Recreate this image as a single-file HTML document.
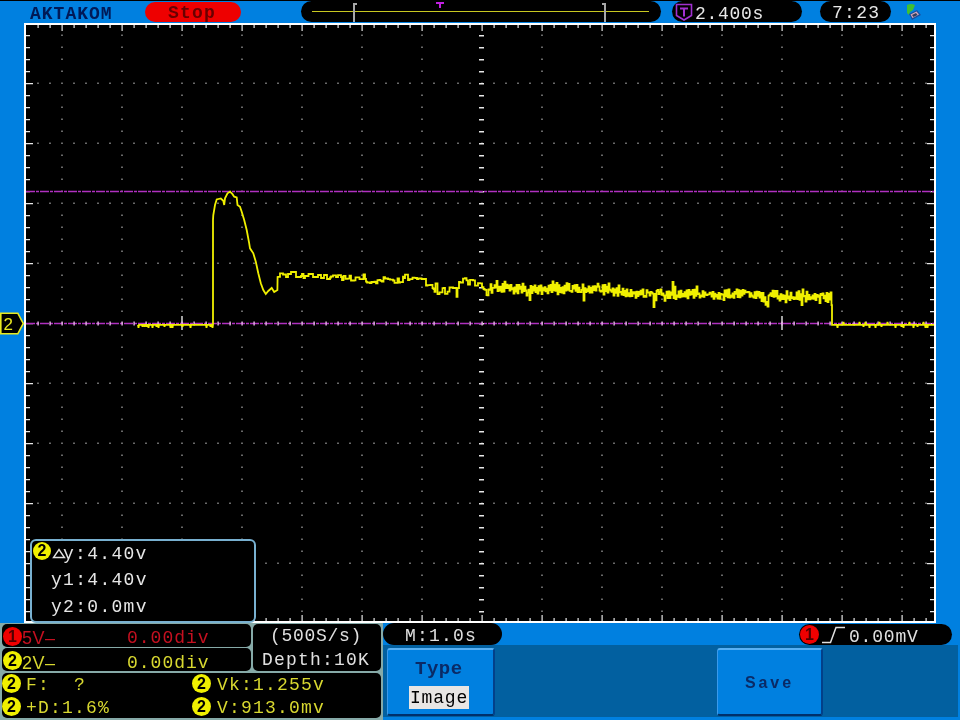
<!DOCTYPE html>
<html><head><meta charset="utf-8">
<style>
html,body{margin:0;padding:0;}
body{width:960px;height:720px;overflow:hidden;position:relative;background:#0080e0;font-family:"Liberation Mono",monospace;}
.a{position:absolute;}
.pill{position:absolute;background:#000;border-radius:11px;}
.txt{position:absolute;white-space:pre;line-height:1;will-change:transform;}
.box{position:absolute;background:#000;border:1px solid #86aaa8;border-radius:5px;box-sizing:border-box;}
.badge{position:absolute;width:19px;height:19px;border-radius:50%;background:#f0f000;color:#000;font-family:"Liberation Sans",sans-serif;font-size:16px;font-weight:bold;line-height:19px;text-align:center;}
.badge.r{background:#f00000;color:#500000;}
.btn{position:absolute;background:#0080e0;border-top:2px solid #58b0f4;border-left:1px solid #3a9aec;border-bottom:2px solid #00306a;border-right:2px solid #02408a;border-radius:3px;box-sizing:border-box;}
</style></head>
<body>
<div class="a" style="left:0;top:0;width:960px;height:1px;background:#000"></div>

<!-- top bar -->
<div class="txt" style="left:30px;top:5px;font-size:18px;color:#001a58;letter-spacing:1px;font-weight:bold">AKTAKOM</div>
<div class="pill" style="left:145px;top:2px;width:96px;height:20px;background:#ee0000;border-radius:10px"></div>
<div class="txt" style="left:168px;top:4px;font-size:18px;font-weight:bold;color:#6a0000;letter-spacing:1.2px">Stop</div>

<div class="pill" style="left:301px;top:1px;width:360px;height:21px"></div>
<div class="a" style="left:312px;top:11px;width:337px;height:1px;background:#c8c820"></div>
<div class="a" style="left:353px;top:3px;width:2px;height:19px;background:#a8a8a8"></div>
<div class="a" style="left:353px;top:3px;width:4px;height:1.5px;background:#a8a8a8"></div>
<div class="a" style="left:604px;top:3px;width:2px;height:19px;background:#a8a8a8"></div>
<div class="a" style="left:602px;top:3px;width:4px;height:1.5px;background:#a8a8a8"></div>
<svg class="a" style="left:435px;top:2px" width="10" height="7"><path d="M1 0h8v2h-3v4h-2v-4h-3z" fill="#c020e0"/></svg>

<div class="pill" style="left:672px;top:1px;width:130px;height:21px"></div>
<svg class="a" style="left:675px;top:3px" width="18" height="18"><path d="M1.5 1.5h15v11l-7.5 4.5l-7.5-4.5z" fill="none" stroke="#a030d0" stroke-width="1.6"/><path d="M5 4.5h8v2h-3v7h-2v-7h-3z" fill="#a030d0"/></svg>
<div class="txt" style="left:695px;top:5px;font-size:18px;color:#e8e8e8;letter-spacing:0.7px">2.400s</div>

<div class="pill" style="left:820px;top:1px;width:71px;height:21px"></div>
<div class="txt" style="left:832px;top:4px;font-size:18px;color:#e8e8e8;letter-spacing:1.3px">7:23</div>

<svg class="a" style="left:898px;top:0px" width="32" height="24"><path d="M9 5q4-2 8 0l-2 5l-3 2l-1 3l-2-2z" fill="#40c030"/><path d="M11 14l8-4l4 5l-9 5z" fill="#1850a0"/><path d="M12.5 14.5l6-3l2.5 3l-6.5 3.5z" fill="#d8a8b8"/><path d="M14 15l4-2l1.5 2l-4 2z" fill="#304060"/></svg>

<!-- grid -->
<svg class="a" style="left:0;top:0" width="960" height="720">
<rect x="26" y="25" width="908" height="596" fill="#000"/>
<path d="M37.25 82.5h1.5v1.5h-1.5zM37.25 142.5h1.5v1.5h-1.5zM37.25 202.5h1.5v1.5h-1.5zM37.25 262.5h1.5v1.5h-1.5zM37.25 382.5h1.5v1.5h-1.5zM37.25 442.5h1.5v1.5h-1.5zM37.25 502.5h1.5v1.5h-1.5zM37.25 562.5h1.5v1.5h-1.5zM49.25 82.5h1.5v1.5h-1.5zM49.25 142.5h1.5v1.5h-1.5zM49.25 202.5h1.5v1.5h-1.5zM49.25 262.5h1.5v1.5h-1.5zM49.25 382.5h1.5v1.5h-1.5zM49.25 442.5h1.5v1.5h-1.5zM49.25 502.5h1.5v1.5h-1.5zM49.25 562.5h1.5v1.5h-1.5zM61.25 34.5h1.5v1.5h-1.5zM61.25 46.5h1.5v1.5h-1.5zM61.25 58.5h1.5v1.5h-1.5zM61.25 70.5h1.5v1.5h-1.5zM61.25 82.5h1.5v1.5h-1.5zM61.25 94.5h1.5v1.5h-1.5zM61.25 106.5h1.5v1.5h-1.5zM61.25 118.5h1.5v1.5h-1.5zM61.25 130.5h1.5v1.5h-1.5zM61.25 142.5h1.5v1.5h-1.5zM61.25 154.5h1.5v1.5h-1.5zM61.25 166.5h1.5v1.5h-1.5zM61.25 178.5h1.5v1.5h-1.5zM61.25 190.5h1.5v1.5h-1.5zM61.25 202.5h1.5v1.5h-1.5zM61.25 214.5h1.5v1.5h-1.5zM61.25 226.5h1.5v1.5h-1.5zM61.25 238.5h1.5v1.5h-1.5zM61.25 250.5h1.5v1.5h-1.5zM61.25 262.5h1.5v1.5h-1.5zM61.25 274.5h1.5v1.5h-1.5zM61.25 286.5h1.5v1.5h-1.5zM61.25 298.5h1.5v1.5h-1.5zM61.25 310.5h1.5v1.5h-1.5zM61.25 322.5h1.5v1.5h-1.5zM61.25 334.5h1.5v1.5h-1.5zM61.25 346.5h1.5v1.5h-1.5zM61.25 358.5h1.5v1.5h-1.5zM61.25 370.5h1.5v1.5h-1.5zM61.25 382.5h1.5v1.5h-1.5zM61.25 394.5h1.5v1.5h-1.5zM61.25 406.5h1.5v1.5h-1.5zM61.25 418.5h1.5v1.5h-1.5zM61.25 430.5h1.5v1.5h-1.5zM61.25 442.5h1.5v1.5h-1.5zM61.25 454.5h1.5v1.5h-1.5zM61.25 466.5h1.5v1.5h-1.5zM61.25 478.5h1.5v1.5h-1.5zM61.25 490.5h1.5v1.5h-1.5zM61.25 502.5h1.5v1.5h-1.5zM61.25 514.5h1.5v1.5h-1.5zM61.25 526.5h1.5v1.5h-1.5zM61.25 538.5h1.5v1.5h-1.5zM61.25 550.5h1.5v1.5h-1.5zM61.25 562.5h1.5v1.5h-1.5zM61.25 574.5h1.5v1.5h-1.5zM61.25 586.5h1.5v1.5h-1.5zM61.25 598.5h1.5v1.5h-1.5zM61.25 610.5h1.5v1.5h-1.5zM73.25 82.5h1.5v1.5h-1.5zM73.25 142.5h1.5v1.5h-1.5zM73.25 202.5h1.5v1.5h-1.5zM73.25 262.5h1.5v1.5h-1.5zM73.25 382.5h1.5v1.5h-1.5zM73.25 442.5h1.5v1.5h-1.5zM73.25 502.5h1.5v1.5h-1.5zM73.25 562.5h1.5v1.5h-1.5zM85.25 82.5h1.5v1.5h-1.5zM85.25 142.5h1.5v1.5h-1.5zM85.25 202.5h1.5v1.5h-1.5zM85.25 262.5h1.5v1.5h-1.5zM85.25 382.5h1.5v1.5h-1.5zM85.25 442.5h1.5v1.5h-1.5zM85.25 502.5h1.5v1.5h-1.5zM85.25 562.5h1.5v1.5h-1.5zM97.25 82.5h1.5v1.5h-1.5zM97.25 142.5h1.5v1.5h-1.5zM97.25 202.5h1.5v1.5h-1.5zM97.25 262.5h1.5v1.5h-1.5zM97.25 382.5h1.5v1.5h-1.5zM97.25 442.5h1.5v1.5h-1.5zM97.25 502.5h1.5v1.5h-1.5zM97.25 562.5h1.5v1.5h-1.5zM109.25 82.5h1.5v1.5h-1.5zM109.25 142.5h1.5v1.5h-1.5zM109.25 202.5h1.5v1.5h-1.5zM109.25 262.5h1.5v1.5h-1.5zM109.25 382.5h1.5v1.5h-1.5zM109.25 442.5h1.5v1.5h-1.5zM109.25 502.5h1.5v1.5h-1.5zM109.25 562.5h1.5v1.5h-1.5zM121.25 34.5h1.5v1.5h-1.5zM121.25 46.5h1.5v1.5h-1.5zM121.25 58.5h1.5v1.5h-1.5zM121.25 70.5h1.5v1.5h-1.5zM121.25 82.5h1.5v1.5h-1.5zM121.25 94.5h1.5v1.5h-1.5zM121.25 106.5h1.5v1.5h-1.5zM121.25 118.5h1.5v1.5h-1.5zM121.25 130.5h1.5v1.5h-1.5zM121.25 142.5h1.5v1.5h-1.5zM121.25 154.5h1.5v1.5h-1.5zM121.25 166.5h1.5v1.5h-1.5zM121.25 178.5h1.5v1.5h-1.5zM121.25 190.5h1.5v1.5h-1.5zM121.25 202.5h1.5v1.5h-1.5zM121.25 214.5h1.5v1.5h-1.5zM121.25 226.5h1.5v1.5h-1.5zM121.25 238.5h1.5v1.5h-1.5zM121.25 250.5h1.5v1.5h-1.5zM121.25 262.5h1.5v1.5h-1.5zM121.25 274.5h1.5v1.5h-1.5zM121.25 286.5h1.5v1.5h-1.5zM121.25 298.5h1.5v1.5h-1.5zM121.25 310.5h1.5v1.5h-1.5zM121.25 322.5h1.5v1.5h-1.5zM121.25 334.5h1.5v1.5h-1.5zM121.25 346.5h1.5v1.5h-1.5zM121.25 358.5h1.5v1.5h-1.5zM121.25 370.5h1.5v1.5h-1.5zM121.25 382.5h1.5v1.5h-1.5zM121.25 394.5h1.5v1.5h-1.5zM121.25 406.5h1.5v1.5h-1.5zM121.25 418.5h1.5v1.5h-1.5zM121.25 430.5h1.5v1.5h-1.5zM121.25 442.5h1.5v1.5h-1.5zM121.25 454.5h1.5v1.5h-1.5zM121.25 466.5h1.5v1.5h-1.5zM121.25 478.5h1.5v1.5h-1.5zM121.25 490.5h1.5v1.5h-1.5zM121.25 502.5h1.5v1.5h-1.5zM121.25 514.5h1.5v1.5h-1.5zM121.25 526.5h1.5v1.5h-1.5zM121.25 538.5h1.5v1.5h-1.5zM121.25 550.5h1.5v1.5h-1.5zM121.25 562.5h1.5v1.5h-1.5zM121.25 574.5h1.5v1.5h-1.5zM121.25 586.5h1.5v1.5h-1.5zM121.25 598.5h1.5v1.5h-1.5zM121.25 610.5h1.5v1.5h-1.5zM133.25 82.5h1.5v1.5h-1.5zM133.25 142.5h1.5v1.5h-1.5zM133.25 202.5h1.5v1.5h-1.5zM133.25 262.5h1.5v1.5h-1.5zM133.25 382.5h1.5v1.5h-1.5zM133.25 442.5h1.5v1.5h-1.5zM133.25 502.5h1.5v1.5h-1.5zM133.25 562.5h1.5v1.5h-1.5zM145.25 82.5h1.5v1.5h-1.5zM145.25 142.5h1.5v1.5h-1.5zM145.25 202.5h1.5v1.5h-1.5zM145.25 262.5h1.5v1.5h-1.5zM145.25 382.5h1.5v1.5h-1.5zM145.25 442.5h1.5v1.5h-1.5zM145.25 502.5h1.5v1.5h-1.5zM145.25 562.5h1.5v1.5h-1.5zM157.25 82.5h1.5v1.5h-1.5zM157.25 142.5h1.5v1.5h-1.5zM157.25 202.5h1.5v1.5h-1.5zM157.25 262.5h1.5v1.5h-1.5zM157.25 382.5h1.5v1.5h-1.5zM157.25 442.5h1.5v1.5h-1.5zM157.25 502.5h1.5v1.5h-1.5zM157.25 562.5h1.5v1.5h-1.5zM169.25 82.5h1.5v1.5h-1.5zM169.25 142.5h1.5v1.5h-1.5zM169.25 202.5h1.5v1.5h-1.5zM169.25 262.5h1.5v1.5h-1.5zM169.25 382.5h1.5v1.5h-1.5zM169.25 442.5h1.5v1.5h-1.5zM169.25 502.5h1.5v1.5h-1.5zM169.25 562.5h1.5v1.5h-1.5zM181.25 34.5h1.5v1.5h-1.5zM181.25 46.5h1.5v1.5h-1.5zM181.25 58.5h1.5v1.5h-1.5zM181.25 70.5h1.5v1.5h-1.5zM181.25 82.5h1.5v1.5h-1.5zM181.25 94.5h1.5v1.5h-1.5zM181.25 106.5h1.5v1.5h-1.5zM181.25 118.5h1.5v1.5h-1.5zM181.25 130.5h1.5v1.5h-1.5zM181.25 142.5h1.5v1.5h-1.5zM181.25 154.5h1.5v1.5h-1.5zM181.25 166.5h1.5v1.5h-1.5zM181.25 178.5h1.5v1.5h-1.5zM181.25 190.5h1.5v1.5h-1.5zM181.25 202.5h1.5v1.5h-1.5zM181.25 214.5h1.5v1.5h-1.5zM181.25 226.5h1.5v1.5h-1.5zM181.25 238.5h1.5v1.5h-1.5zM181.25 250.5h1.5v1.5h-1.5zM181.25 262.5h1.5v1.5h-1.5zM181.25 274.5h1.5v1.5h-1.5zM181.25 286.5h1.5v1.5h-1.5zM181.25 298.5h1.5v1.5h-1.5zM181.25 310.5h1.5v1.5h-1.5zM181.25 322.5h1.5v1.5h-1.5zM181.25 334.5h1.5v1.5h-1.5zM181.25 346.5h1.5v1.5h-1.5zM181.25 358.5h1.5v1.5h-1.5zM181.25 370.5h1.5v1.5h-1.5zM181.25 382.5h1.5v1.5h-1.5zM181.25 394.5h1.5v1.5h-1.5zM181.25 406.5h1.5v1.5h-1.5zM181.25 418.5h1.5v1.5h-1.5zM181.25 430.5h1.5v1.5h-1.5zM181.25 442.5h1.5v1.5h-1.5zM181.25 454.5h1.5v1.5h-1.5zM181.25 466.5h1.5v1.5h-1.5zM181.25 478.5h1.5v1.5h-1.5zM181.25 490.5h1.5v1.5h-1.5zM181.25 502.5h1.5v1.5h-1.5zM181.25 514.5h1.5v1.5h-1.5zM181.25 526.5h1.5v1.5h-1.5zM181.25 538.5h1.5v1.5h-1.5zM181.25 550.5h1.5v1.5h-1.5zM181.25 562.5h1.5v1.5h-1.5zM181.25 574.5h1.5v1.5h-1.5zM181.25 586.5h1.5v1.5h-1.5zM181.25 598.5h1.5v1.5h-1.5zM181.25 610.5h1.5v1.5h-1.5zM193.25 82.5h1.5v1.5h-1.5zM193.25 142.5h1.5v1.5h-1.5zM193.25 202.5h1.5v1.5h-1.5zM193.25 262.5h1.5v1.5h-1.5zM193.25 382.5h1.5v1.5h-1.5zM193.25 442.5h1.5v1.5h-1.5zM193.25 502.5h1.5v1.5h-1.5zM193.25 562.5h1.5v1.5h-1.5zM205.25 82.5h1.5v1.5h-1.5zM205.25 142.5h1.5v1.5h-1.5zM205.25 202.5h1.5v1.5h-1.5zM205.25 262.5h1.5v1.5h-1.5zM205.25 382.5h1.5v1.5h-1.5zM205.25 442.5h1.5v1.5h-1.5zM205.25 502.5h1.5v1.5h-1.5zM205.25 562.5h1.5v1.5h-1.5zM217.25 82.5h1.5v1.5h-1.5zM217.25 142.5h1.5v1.5h-1.5zM217.25 202.5h1.5v1.5h-1.5zM217.25 262.5h1.5v1.5h-1.5zM217.25 382.5h1.5v1.5h-1.5zM217.25 442.5h1.5v1.5h-1.5zM217.25 502.5h1.5v1.5h-1.5zM217.25 562.5h1.5v1.5h-1.5zM229.25 82.5h1.5v1.5h-1.5zM229.25 142.5h1.5v1.5h-1.5zM229.25 202.5h1.5v1.5h-1.5zM229.25 262.5h1.5v1.5h-1.5zM229.25 382.5h1.5v1.5h-1.5zM229.25 442.5h1.5v1.5h-1.5zM229.25 502.5h1.5v1.5h-1.5zM229.25 562.5h1.5v1.5h-1.5zM241.25 34.5h1.5v1.5h-1.5zM241.25 46.5h1.5v1.5h-1.5zM241.25 58.5h1.5v1.5h-1.5zM241.25 70.5h1.5v1.5h-1.5zM241.25 82.5h1.5v1.5h-1.5zM241.25 94.5h1.5v1.5h-1.5zM241.25 106.5h1.5v1.5h-1.5zM241.25 118.5h1.5v1.5h-1.5zM241.25 130.5h1.5v1.5h-1.5zM241.25 142.5h1.5v1.5h-1.5zM241.25 154.5h1.5v1.5h-1.5zM241.25 166.5h1.5v1.5h-1.5zM241.25 178.5h1.5v1.5h-1.5zM241.25 190.5h1.5v1.5h-1.5zM241.25 202.5h1.5v1.5h-1.5zM241.25 214.5h1.5v1.5h-1.5zM241.25 226.5h1.5v1.5h-1.5zM241.25 238.5h1.5v1.5h-1.5zM241.25 250.5h1.5v1.5h-1.5zM241.25 262.5h1.5v1.5h-1.5zM241.25 274.5h1.5v1.5h-1.5zM241.25 286.5h1.5v1.5h-1.5zM241.25 298.5h1.5v1.5h-1.5zM241.25 310.5h1.5v1.5h-1.5zM241.25 322.5h1.5v1.5h-1.5zM241.25 334.5h1.5v1.5h-1.5zM241.25 346.5h1.5v1.5h-1.5zM241.25 358.5h1.5v1.5h-1.5zM241.25 370.5h1.5v1.5h-1.5zM241.25 382.5h1.5v1.5h-1.5zM241.25 394.5h1.5v1.5h-1.5zM241.25 406.5h1.5v1.5h-1.5zM241.25 418.5h1.5v1.5h-1.5zM241.25 430.5h1.5v1.5h-1.5zM241.25 442.5h1.5v1.5h-1.5zM241.25 454.5h1.5v1.5h-1.5zM241.25 466.5h1.5v1.5h-1.5zM241.25 478.5h1.5v1.5h-1.5zM241.25 490.5h1.5v1.5h-1.5zM241.25 502.5h1.5v1.5h-1.5zM241.25 514.5h1.5v1.5h-1.5zM241.25 526.5h1.5v1.5h-1.5zM241.25 538.5h1.5v1.5h-1.5zM241.25 550.5h1.5v1.5h-1.5zM241.25 562.5h1.5v1.5h-1.5zM241.25 574.5h1.5v1.5h-1.5zM241.25 586.5h1.5v1.5h-1.5zM241.25 598.5h1.5v1.5h-1.5zM241.25 610.5h1.5v1.5h-1.5zM253.25 82.5h1.5v1.5h-1.5zM253.25 142.5h1.5v1.5h-1.5zM253.25 202.5h1.5v1.5h-1.5zM253.25 262.5h1.5v1.5h-1.5zM253.25 382.5h1.5v1.5h-1.5zM253.25 442.5h1.5v1.5h-1.5zM253.25 502.5h1.5v1.5h-1.5zM253.25 562.5h1.5v1.5h-1.5zM265.25 82.5h1.5v1.5h-1.5zM265.25 142.5h1.5v1.5h-1.5zM265.25 202.5h1.5v1.5h-1.5zM265.25 262.5h1.5v1.5h-1.5zM265.25 382.5h1.5v1.5h-1.5zM265.25 442.5h1.5v1.5h-1.5zM265.25 502.5h1.5v1.5h-1.5zM265.25 562.5h1.5v1.5h-1.5zM277.25 82.5h1.5v1.5h-1.5zM277.25 142.5h1.5v1.5h-1.5zM277.25 202.5h1.5v1.5h-1.5zM277.25 262.5h1.5v1.5h-1.5zM277.25 382.5h1.5v1.5h-1.5zM277.25 442.5h1.5v1.5h-1.5zM277.25 502.5h1.5v1.5h-1.5zM277.25 562.5h1.5v1.5h-1.5zM289.25 82.5h1.5v1.5h-1.5zM289.25 142.5h1.5v1.5h-1.5zM289.25 202.5h1.5v1.5h-1.5zM289.25 262.5h1.5v1.5h-1.5zM289.25 382.5h1.5v1.5h-1.5zM289.25 442.5h1.5v1.5h-1.5zM289.25 502.5h1.5v1.5h-1.5zM289.25 562.5h1.5v1.5h-1.5zM301.25 34.5h1.5v1.5h-1.5zM301.25 46.5h1.5v1.5h-1.5zM301.25 58.5h1.5v1.5h-1.5zM301.25 70.5h1.5v1.5h-1.5zM301.25 82.5h1.5v1.5h-1.5zM301.25 94.5h1.5v1.5h-1.5zM301.25 106.5h1.5v1.5h-1.5zM301.25 118.5h1.5v1.5h-1.5zM301.25 130.5h1.5v1.5h-1.5zM301.25 142.5h1.5v1.5h-1.5zM301.25 154.5h1.5v1.5h-1.5zM301.25 166.5h1.5v1.5h-1.5zM301.25 178.5h1.5v1.5h-1.5zM301.25 190.5h1.5v1.5h-1.5zM301.25 202.5h1.5v1.5h-1.5zM301.25 214.5h1.5v1.5h-1.5zM301.25 226.5h1.5v1.5h-1.5zM301.25 238.5h1.5v1.5h-1.5zM301.25 250.5h1.5v1.5h-1.5zM301.25 262.5h1.5v1.5h-1.5zM301.25 274.5h1.5v1.5h-1.5zM301.25 286.5h1.5v1.5h-1.5zM301.25 298.5h1.5v1.5h-1.5zM301.25 310.5h1.5v1.5h-1.5zM301.25 322.5h1.5v1.5h-1.5zM301.25 334.5h1.5v1.5h-1.5zM301.25 346.5h1.5v1.5h-1.5zM301.25 358.5h1.5v1.5h-1.5zM301.25 370.5h1.5v1.5h-1.5zM301.25 382.5h1.5v1.5h-1.5zM301.25 394.5h1.5v1.5h-1.5zM301.25 406.5h1.5v1.5h-1.5zM301.25 418.5h1.5v1.5h-1.5zM301.25 430.5h1.5v1.5h-1.5zM301.25 442.5h1.5v1.5h-1.5zM301.25 454.5h1.5v1.5h-1.5zM301.25 466.5h1.5v1.5h-1.5zM301.25 478.5h1.5v1.5h-1.5zM301.25 490.5h1.5v1.5h-1.5zM301.25 502.5h1.5v1.5h-1.5zM301.25 514.5h1.5v1.5h-1.5zM301.25 526.5h1.5v1.5h-1.5zM301.25 538.5h1.5v1.5h-1.5zM301.25 550.5h1.5v1.5h-1.5zM301.25 562.5h1.5v1.5h-1.5zM301.25 574.5h1.5v1.5h-1.5zM301.25 586.5h1.5v1.5h-1.5zM301.25 598.5h1.5v1.5h-1.5zM301.25 610.5h1.5v1.5h-1.5zM313.25 82.5h1.5v1.5h-1.5zM313.25 142.5h1.5v1.5h-1.5zM313.25 202.5h1.5v1.5h-1.5zM313.25 262.5h1.5v1.5h-1.5zM313.25 382.5h1.5v1.5h-1.5zM313.25 442.5h1.5v1.5h-1.5zM313.25 502.5h1.5v1.5h-1.5zM313.25 562.5h1.5v1.5h-1.5zM325.25 82.5h1.5v1.5h-1.5zM325.25 142.5h1.5v1.5h-1.5zM325.25 202.5h1.5v1.5h-1.5zM325.25 262.5h1.5v1.5h-1.5zM325.25 382.5h1.5v1.5h-1.5zM325.25 442.5h1.5v1.5h-1.5zM325.25 502.5h1.5v1.5h-1.5zM325.25 562.5h1.5v1.5h-1.5zM337.25 82.5h1.5v1.5h-1.5zM337.25 142.5h1.5v1.5h-1.5zM337.25 202.5h1.5v1.5h-1.5zM337.25 262.5h1.5v1.5h-1.5zM337.25 382.5h1.5v1.5h-1.5zM337.25 442.5h1.5v1.5h-1.5zM337.25 502.5h1.5v1.5h-1.5zM337.25 562.5h1.5v1.5h-1.5zM349.25 82.5h1.5v1.5h-1.5zM349.25 142.5h1.5v1.5h-1.5zM349.25 202.5h1.5v1.5h-1.5zM349.25 262.5h1.5v1.5h-1.5zM349.25 382.5h1.5v1.5h-1.5zM349.25 442.5h1.5v1.5h-1.5zM349.25 502.5h1.5v1.5h-1.5zM349.25 562.5h1.5v1.5h-1.5zM361.25 34.5h1.5v1.5h-1.5zM361.25 46.5h1.5v1.5h-1.5zM361.25 58.5h1.5v1.5h-1.5zM361.25 70.5h1.5v1.5h-1.5zM361.25 82.5h1.5v1.5h-1.5zM361.25 94.5h1.5v1.5h-1.5zM361.25 106.5h1.5v1.5h-1.5zM361.25 118.5h1.5v1.5h-1.5zM361.25 130.5h1.5v1.5h-1.5zM361.25 142.5h1.5v1.5h-1.5zM361.25 154.5h1.5v1.5h-1.5zM361.25 166.5h1.5v1.5h-1.5zM361.25 178.5h1.5v1.5h-1.5zM361.25 190.5h1.5v1.5h-1.5zM361.25 202.5h1.5v1.5h-1.5zM361.25 214.5h1.5v1.5h-1.5zM361.25 226.5h1.5v1.5h-1.5zM361.25 238.5h1.5v1.5h-1.5zM361.25 250.5h1.5v1.5h-1.5zM361.25 262.5h1.5v1.5h-1.5zM361.25 274.5h1.5v1.5h-1.5zM361.25 286.5h1.5v1.5h-1.5zM361.25 298.5h1.5v1.5h-1.5zM361.25 310.5h1.5v1.5h-1.5zM361.25 322.5h1.5v1.5h-1.5zM361.25 334.5h1.5v1.5h-1.5zM361.25 346.5h1.5v1.5h-1.5zM361.25 358.5h1.5v1.5h-1.5zM361.25 370.5h1.5v1.5h-1.5zM361.25 382.5h1.5v1.5h-1.5zM361.25 394.5h1.5v1.5h-1.5zM361.25 406.5h1.5v1.5h-1.5zM361.25 418.5h1.5v1.5h-1.5zM361.25 430.5h1.5v1.5h-1.5zM361.25 442.5h1.5v1.5h-1.5zM361.25 454.5h1.5v1.5h-1.5zM361.25 466.5h1.5v1.5h-1.5zM361.25 478.5h1.5v1.5h-1.5zM361.25 490.5h1.5v1.5h-1.5zM361.25 502.5h1.5v1.5h-1.5zM361.25 514.5h1.5v1.5h-1.5zM361.25 526.5h1.5v1.5h-1.5zM361.25 538.5h1.5v1.5h-1.5zM361.25 550.5h1.5v1.5h-1.5zM361.25 562.5h1.5v1.5h-1.5zM361.25 574.5h1.5v1.5h-1.5zM361.25 586.5h1.5v1.5h-1.5zM361.25 598.5h1.5v1.5h-1.5zM361.25 610.5h1.5v1.5h-1.5zM373.25 82.5h1.5v1.5h-1.5zM373.25 142.5h1.5v1.5h-1.5zM373.25 202.5h1.5v1.5h-1.5zM373.25 262.5h1.5v1.5h-1.5zM373.25 382.5h1.5v1.5h-1.5zM373.25 442.5h1.5v1.5h-1.5zM373.25 502.5h1.5v1.5h-1.5zM373.25 562.5h1.5v1.5h-1.5zM385.25 82.5h1.5v1.5h-1.5zM385.25 142.5h1.5v1.5h-1.5zM385.25 202.5h1.5v1.5h-1.5zM385.25 262.5h1.5v1.5h-1.5zM385.25 382.5h1.5v1.5h-1.5zM385.25 442.5h1.5v1.5h-1.5zM385.25 502.5h1.5v1.5h-1.5zM385.25 562.5h1.5v1.5h-1.5zM397.25 82.5h1.5v1.5h-1.5zM397.25 142.5h1.5v1.5h-1.5zM397.25 202.5h1.5v1.5h-1.5zM397.25 262.5h1.5v1.5h-1.5zM397.25 382.5h1.5v1.5h-1.5zM397.25 442.5h1.5v1.5h-1.5zM397.25 502.5h1.5v1.5h-1.5zM397.25 562.5h1.5v1.5h-1.5zM409.25 82.5h1.5v1.5h-1.5zM409.25 142.5h1.5v1.5h-1.5zM409.25 202.5h1.5v1.5h-1.5zM409.25 262.5h1.5v1.5h-1.5zM409.25 382.5h1.5v1.5h-1.5zM409.25 442.5h1.5v1.5h-1.5zM409.25 502.5h1.5v1.5h-1.5zM409.25 562.5h1.5v1.5h-1.5zM421.25 34.5h1.5v1.5h-1.5zM421.25 46.5h1.5v1.5h-1.5zM421.25 58.5h1.5v1.5h-1.5zM421.25 70.5h1.5v1.5h-1.5zM421.25 82.5h1.5v1.5h-1.5zM421.25 94.5h1.5v1.5h-1.5zM421.25 106.5h1.5v1.5h-1.5zM421.25 118.5h1.5v1.5h-1.5zM421.25 130.5h1.5v1.5h-1.5zM421.25 142.5h1.5v1.5h-1.5zM421.25 154.5h1.5v1.5h-1.5zM421.25 166.5h1.5v1.5h-1.5zM421.25 178.5h1.5v1.5h-1.5zM421.25 190.5h1.5v1.5h-1.5zM421.25 202.5h1.5v1.5h-1.5zM421.25 214.5h1.5v1.5h-1.5zM421.25 226.5h1.5v1.5h-1.5zM421.25 238.5h1.5v1.5h-1.5zM421.25 250.5h1.5v1.5h-1.5zM421.25 262.5h1.5v1.5h-1.5zM421.25 274.5h1.5v1.5h-1.5zM421.25 286.5h1.5v1.5h-1.5zM421.25 298.5h1.5v1.5h-1.5zM421.25 310.5h1.5v1.5h-1.5zM421.25 322.5h1.5v1.5h-1.5zM421.25 334.5h1.5v1.5h-1.5zM421.25 346.5h1.5v1.5h-1.5zM421.25 358.5h1.5v1.5h-1.5zM421.25 370.5h1.5v1.5h-1.5zM421.25 382.5h1.5v1.5h-1.5zM421.25 394.5h1.5v1.5h-1.5zM421.25 406.5h1.5v1.5h-1.5zM421.25 418.5h1.5v1.5h-1.5zM421.25 430.5h1.5v1.5h-1.5zM421.25 442.5h1.5v1.5h-1.5zM421.25 454.5h1.5v1.5h-1.5zM421.25 466.5h1.5v1.5h-1.5zM421.25 478.5h1.5v1.5h-1.5zM421.25 490.5h1.5v1.5h-1.5zM421.25 502.5h1.5v1.5h-1.5zM421.25 514.5h1.5v1.5h-1.5zM421.25 526.5h1.5v1.5h-1.5zM421.25 538.5h1.5v1.5h-1.5zM421.25 550.5h1.5v1.5h-1.5zM421.25 562.5h1.5v1.5h-1.5zM421.25 574.5h1.5v1.5h-1.5zM421.25 586.5h1.5v1.5h-1.5zM421.25 598.5h1.5v1.5h-1.5zM421.25 610.5h1.5v1.5h-1.5zM433.25 82.5h1.5v1.5h-1.5zM433.25 142.5h1.5v1.5h-1.5zM433.25 202.5h1.5v1.5h-1.5zM433.25 262.5h1.5v1.5h-1.5zM433.25 382.5h1.5v1.5h-1.5zM433.25 442.5h1.5v1.5h-1.5zM433.25 502.5h1.5v1.5h-1.5zM433.25 562.5h1.5v1.5h-1.5zM445.25 82.5h1.5v1.5h-1.5zM445.25 142.5h1.5v1.5h-1.5zM445.25 202.5h1.5v1.5h-1.5zM445.25 262.5h1.5v1.5h-1.5zM445.25 382.5h1.5v1.5h-1.5zM445.25 442.5h1.5v1.5h-1.5zM445.25 502.5h1.5v1.5h-1.5zM445.25 562.5h1.5v1.5h-1.5zM457.25 82.5h1.5v1.5h-1.5zM457.25 142.5h1.5v1.5h-1.5zM457.25 202.5h1.5v1.5h-1.5zM457.25 262.5h1.5v1.5h-1.5zM457.25 382.5h1.5v1.5h-1.5zM457.25 442.5h1.5v1.5h-1.5zM457.25 502.5h1.5v1.5h-1.5zM457.25 562.5h1.5v1.5h-1.5zM469.25 82.5h1.5v1.5h-1.5zM469.25 142.5h1.5v1.5h-1.5zM469.25 202.5h1.5v1.5h-1.5zM469.25 262.5h1.5v1.5h-1.5zM469.25 382.5h1.5v1.5h-1.5zM469.25 442.5h1.5v1.5h-1.5zM469.25 502.5h1.5v1.5h-1.5zM469.25 562.5h1.5v1.5h-1.5zM481.25 82.5h1.5v1.5h-1.5zM481.25 142.5h1.5v1.5h-1.5zM481.25 202.5h1.5v1.5h-1.5zM481.25 262.5h1.5v1.5h-1.5zM481.25 382.5h1.5v1.5h-1.5zM481.25 442.5h1.5v1.5h-1.5zM481.25 502.5h1.5v1.5h-1.5zM481.25 562.5h1.5v1.5h-1.5zM493.25 82.5h1.5v1.5h-1.5zM493.25 142.5h1.5v1.5h-1.5zM493.25 202.5h1.5v1.5h-1.5zM493.25 262.5h1.5v1.5h-1.5zM493.25 382.5h1.5v1.5h-1.5zM493.25 442.5h1.5v1.5h-1.5zM493.25 502.5h1.5v1.5h-1.5zM493.25 562.5h1.5v1.5h-1.5zM505.25 82.5h1.5v1.5h-1.5zM505.25 142.5h1.5v1.5h-1.5zM505.25 202.5h1.5v1.5h-1.5zM505.25 262.5h1.5v1.5h-1.5zM505.25 382.5h1.5v1.5h-1.5zM505.25 442.5h1.5v1.5h-1.5zM505.25 502.5h1.5v1.5h-1.5zM505.25 562.5h1.5v1.5h-1.5zM517.25 82.5h1.5v1.5h-1.5zM517.25 142.5h1.5v1.5h-1.5zM517.25 202.5h1.5v1.5h-1.5zM517.25 262.5h1.5v1.5h-1.5zM517.25 382.5h1.5v1.5h-1.5zM517.25 442.5h1.5v1.5h-1.5zM517.25 502.5h1.5v1.5h-1.5zM517.25 562.5h1.5v1.5h-1.5zM529.25 82.5h1.5v1.5h-1.5zM529.25 142.5h1.5v1.5h-1.5zM529.25 202.5h1.5v1.5h-1.5zM529.25 262.5h1.5v1.5h-1.5zM529.25 382.5h1.5v1.5h-1.5zM529.25 442.5h1.5v1.5h-1.5zM529.25 502.5h1.5v1.5h-1.5zM529.25 562.5h1.5v1.5h-1.5zM541.25 34.5h1.5v1.5h-1.5zM541.25 46.5h1.5v1.5h-1.5zM541.25 58.5h1.5v1.5h-1.5zM541.25 70.5h1.5v1.5h-1.5zM541.25 82.5h1.5v1.5h-1.5zM541.25 94.5h1.5v1.5h-1.5zM541.25 106.5h1.5v1.5h-1.5zM541.25 118.5h1.5v1.5h-1.5zM541.25 130.5h1.5v1.5h-1.5zM541.25 142.5h1.5v1.5h-1.5zM541.25 154.5h1.5v1.5h-1.5zM541.25 166.5h1.5v1.5h-1.5zM541.25 178.5h1.5v1.5h-1.5zM541.25 190.5h1.5v1.5h-1.5zM541.25 202.5h1.5v1.5h-1.5zM541.25 214.5h1.5v1.5h-1.5zM541.25 226.5h1.5v1.5h-1.5zM541.25 238.5h1.5v1.5h-1.5zM541.25 250.5h1.5v1.5h-1.5zM541.25 262.5h1.5v1.5h-1.5zM541.25 274.5h1.5v1.5h-1.5zM541.25 286.5h1.5v1.5h-1.5zM541.25 298.5h1.5v1.5h-1.5zM541.25 310.5h1.5v1.5h-1.5zM541.25 322.5h1.5v1.5h-1.5zM541.25 334.5h1.5v1.5h-1.5zM541.25 346.5h1.5v1.5h-1.5zM541.25 358.5h1.5v1.5h-1.5zM541.25 370.5h1.5v1.5h-1.5zM541.25 382.5h1.5v1.5h-1.5zM541.25 394.5h1.5v1.5h-1.5zM541.25 406.5h1.5v1.5h-1.5zM541.25 418.5h1.5v1.5h-1.5zM541.25 430.5h1.5v1.5h-1.5zM541.25 442.5h1.5v1.5h-1.5zM541.25 454.5h1.5v1.5h-1.5zM541.25 466.5h1.5v1.5h-1.5zM541.25 478.5h1.5v1.5h-1.5zM541.25 490.5h1.5v1.5h-1.5zM541.25 502.5h1.5v1.5h-1.5zM541.25 514.5h1.5v1.5h-1.5zM541.25 526.5h1.5v1.5h-1.5zM541.25 538.5h1.5v1.5h-1.5zM541.25 550.5h1.5v1.5h-1.5zM541.25 562.5h1.5v1.5h-1.5zM541.25 574.5h1.5v1.5h-1.5zM541.25 586.5h1.5v1.5h-1.5zM541.25 598.5h1.5v1.5h-1.5zM541.25 610.5h1.5v1.5h-1.5zM553.25 82.5h1.5v1.5h-1.5zM553.25 142.5h1.5v1.5h-1.5zM553.25 202.5h1.5v1.5h-1.5zM553.25 262.5h1.5v1.5h-1.5zM553.25 382.5h1.5v1.5h-1.5zM553.25 442.5h1.5v1.5h-1.5zM553.25 502.5h1.5v1.5h-1.5zM553.25 562.5h1.5v1.5h-1.5zM565.25 82.5h1.5v1.5h-1.5zM565.25 142.5h1.5v1.5h-1.5zM565.25 202.5h1.5v1.5h-1.5zM565.25 262.5h1.5v1.5h-1.5zM565.25 382.5h1.5v1.5h-1.5zM565.25 442.5h1.5v1.5h-1.5zM565.25 502.5h1.5v1.5h-1.5zM565.25 562.5h1.5v1.5h-1.5zM577.25 82.5h1.5v1.5h-1.5zM577.25 142.5h1.5v1.5h-1.5zM577.25 202.5h1.5v1.5h-1.5zM577.25 262.5h1.5v1.5h-1.5zM577.25 382.5h1.5v1.5h-1.5zM577.25 442.5h1.5v1.5h-1.5zM577.25 502.5h1.5v1.5h-1.5zM577.25 562.5h1.5v1.5h-1.5zM589.25 82.5h1.5v1.5h-1.5zM589.25 142.5h1.5v1.5h-1.5zM589.25 202.5h1.5v1.5h-1.5zM589.25 262.5h1.5v1.5h-1.5zM589.25 382.5h1.5v1.5h-1.5zM589.25 442.5h1.5v1.5h-1.5zM589.25 502.5h1.5v1.5h-1.5zM589.25 562.5h1.5v1.5h-1.5zM601.25 34.5h1.5v1.5h-1.5zM601.25 46.5h1.5v1.5h-1.5zM601.25 58.5h1.5v1.5h-1.5zM601.25 70.5h1.5v1.5h-1.5zM601.25 82.5h1.5v1.5h-1.5zM601.25 94.5h1.5v1.5h-1.5zM601.25 106.5h1.5v1.5h-1.5zM601.25 118.5h1.5v1.5h-1.5zM601.25 130.5h1.5v1.5h-1.5zM601.25 142.5h1.5v1.5h-1.5zM601.25 154.5h1.5v1.5h-1.5zM601.25 166.5h1.5v1.5h-1.5zM601.25 178.5h1.5v1.5h-1.5zM601.25 190.5h1.5v1.5h-1.5zM601.25 202.5h1.5v1.5h-1.5zM601.25 214.5h1.5v1.5h-1.5zM601.25 226.5h1.5v1.5h-1.5zM601.25 238.5h1.5v1.5h-1.5zM601.25 250.5h1.5v1.5h-1.5zM601.25 262.5h1.5v1.5h-1.5zM601.25 274.5h1.5v1.5h-1.5zM601.25 286.5h1.5v1.5h-1.5zM601.25 298.5h1.5v1.5h-1.5zM601.25 310.5h1.5v1.5h-1.5zM601.25 322.5h1.5v1.5h-1.5zM601.25 334.5h1.5v1.5h-1.5zM601.25 346.5h1.5v1.5h-1.5zM601.25 358.5h1.5v1.5h-1.5zM601.25 370.5h1.5v1.5h-1.5zM601.25 382.5h1.5v1.5h-1.5zM601.25 394.5h1.5v1.5h-1.5zM601.25 406.5h1.5v1.5h-1.5zM601.25 418.5h1.5v1.5h-1.5zM601.25 430.5h1.5v1.5h-1.5zM601.25 442.5h1.5v1.5h-1.5zM601.25 454.5h1.5v1.5h-1.5zM601.25 466.5h1.5v1.5h-1.5zM601.25 478.5h1.5v1.5h-1.5zM601.25 490.5h1.5v1.5h-1.5zM601.25 502.5h1.5v1.5h-1.5zM601.25 514.5h1.5v1.5h-1.5zM601.25 526.5h1.5v1.5h-1.5zM601.25 538.5h1.5v1.5h-1.5zM601.25 550.5h1.5v1.5h-1.5zM601.25 562.5h1.5v1.5h-1.5zM601.25 574.5h1.5v1.5h-1.5zM601.25 586.5h1.5v1.5h-1.5zM601.25 598.5h1.5v1.5h-1.5zM601.25 610.5h1.5v1.5h-1.5zM613.25 82.5h1.5v1.5h-1.5zM613.25 142.5h1.5v1.5h-1.5zM613.25 202.5h1.5v1.5h-1.5zM613.25 262.5h1.5v1.5h-1.5zM613.25 382.5h1.5v1.5h-1.5zM613.25 442.5h1.5v1.5h-1.5zM613.25 502.5h1.5v1.5h-1.5zM613.25 562.5h1.5v1.5h-1.5zM625.25 82.5h1.5v1.5h-1.5zM625.25 142.5h1.5v1.5h-1.5zM625.25 202.5h1.5v1.5h-1.5zM625.25 262.5h1.5v1.5h-1.5zM625.25 382.5h1.5v1.5h-1.5zM625.25 442.5h1.5v1.5h-1.5zM625.25 502.5h1.5v1.5h-1.5zM625.25 562.5h1.5v1.5h-1.5zM637.25 82.5h1.5v1.5h-1.5zM637.25 142.5h1.5v1.5h-1.5zM637.25 202.5h1.5v1.5h-1.5zM637.25 262.5h1.5v1.5h-1.5zM637.25 382.5h1.5v1.5h-1.5zM637.25 442.5h1.5v1.5h-1.5zM637.25 502.5h1.5v1.5h-1.5zM637.25 562.5h1.5v1.5h-1.5zM649.25 82.5h1.5v1.5h-1.5zM649.25 142.5h1.5v1.5h-1.5zM649.25 202.5h1.5v1.5h-1.5zM649.25 262.5h1.5v1.5h-1.5zM649.25 382.5h1.5v1.5h-1.5zM649.25 442.5h1.5v1.5h-1.5zM649.25 502.5h1.5v1.5h-1.5zM649.25 562.5h1.5v1.5h-1.5zM661.25 34.5h1.5v1.5h-1.5zM661.25 46.5h1.5v1.5h-1.5zM661.25 58.5h1.5v1.5h-1.5zM661.25 70.5h1.5v1.5h-1.5zM661.25 82.5h1.5v1.5h-1.5zM661.25 94.5h1.5v1.5h-1.5zM661.25 106.5h1.5v1.5h-1.5zM661.25 118.5h1.5v1.5h-1.5zM661.25 130.5h1.5v1.5h-1.5zM661.25 142.5h1.5v1.5h-1.5zM661.25 154.5h1.5v1.5h-1.5zM661.25 166.5h1.5v1.5h-1.5zM661.25 178.5h1.5v1.5h-1.5zM661.25 190.5h1.5v1.5h-1.5zM661.25 202.5h1.5v1.5h-1.5zM661.25 214.5h1.5v1.5h-1.5zM661.25 226.5h1.5v1.5h-1.5zM661.25 238.5h1.5v1.5h-1.5zM661.25 250.5h1.5v1.5h-1.5zM661.25 262.5h1.5v1.5h-1.5zM661.25 274.5h1.5v1.5h-1.5zM661.25 286.5h1.5v1.5h-1.5zM661.25 298.5h1.5v1.5h-1.5zM661.25 310.5h1.5v1.5h-1.5zM661.25 322.5h1.5v1.5h-1.5zM661.25 334.5h1.5v1.5h-1.5zM661.25 346.5h1.5v1.5h-1.5zM661.25 358.5h1.5v1.5h-1.5zM661.25 370.5h1.5v1.5h-1.5zM661.25 382.5h1.5v1.5h-1.5zM661.25 394.5h1.5v1.5h-1.5zM661.25 406.5h1.5v1.5h-1.5zM661.25 418.5h1.5v1.5h-1.5zM661.25 430.5h1.5v1.5h-1.5zM661.25 442.5h1.5v1.5h-1.5zM661.25 454.5h1.5v1.5h-1.5zM661.25 466.5h1.5v1.5h-1.5zM661.25 478.5h1.5v1.5h-1.5zM661.25 490.5h1.5v1.5h-1.5zM661.25 502.5h1.5v1.5h-1.5zM661.25 514.5h1.5v1.5h-1.5zM661.25 526.5h1.5v1.5h-1.5zM661.25 538.5h1.5v1.5h-1.5zM661.25 550.5h1.5v1.5h-1.5zM661.25 562.5h1.5v1.5h-1.5zM661.25 574.5h1.5v1.5h-1.5zM661.25 586.5h1.5v1.5h-1.5zM661.25 598.5h1.5v1.5h-1.5zM661.25 610.5h1.5v1.5h-1.5zM673.25 82.5h1.5v1.5h-1.5zM673.25 142.5h1.5v1.5h-1.5zM673.25 202.5h1.5v1.5h-1.5zM673.25 262.5h1.5v1.5h-1.5zM673.25 382.5h1.5v1.5h-1.5zM673.25 442.5h1.5v1.5h-1.5zM673.25 502.5h1.5v1.5h-1.5zM673.25 562.5h1.5v1.5h-1.5zM685.25 82.5h1.5v1.5h-1.5zM685.25 142.5h1.5v1.5h-1.5zM685.25 202.5h1.5v1.5h-1.5zM685.25 262.5h1.5v1.5h-1.5zM685.25 382.5h1.5v1.5h-1.5zM685.25 442.5h1.5v1.5h-1.5zM685.25 502.5h1.5v1.5h-1.5zM685.25 562.5h1.5v1.5h-1.5zM697.25 82.5h1.5v1.5h-1.5zM697.25 142.5h1.5v1.5h-1.5zM697.25 202.5h1.5v1.5h-1.5zM697.25 262.5h1.5v1.5h-1.5zM697.25 382.5h1.5v1.5h-1.5zM697.25 442.5h1.5v1.5h-1.5zM697.25 502.5h1.5v1.5h-1.5zM697.25 562.5h1.5v1.5h-1.5zM709.25 82.5h1.5v1.5h-1.5zM709.25 142.5h1.5v1.5h-1.5zM709.25 202.5h1.5v1.5h-1.5zM709.25 262.5h1.5v1.5h-1.5zM709.25 382.5h1.5v1.5h-1.5zM709.25 442.5h1.5v1.5h-1.5zM709.25 502.5h1.5v1.5h-1.5zM709.25 562.5h1.5v1.5h-1.5zM721.25 34.5h1.5v1.5h-1.5zM721.25 46.5h1.5v1.5h-1.5zM721.25 58.5h1.5v1.5h-1.5zM721.25 70.5h1.5v1.5h-1.5zM721.25 82.5h1.5v1.5h-1.5zM721.25 94.5h1.5v1.5h-1.5zM721.25 106.5h1.5v1.5h-1.5zM721.25 118.5h1.5v1.5h-1.5zM721.25 130.5h1.5v1.5h-1.5zM721.25 142.5h1.5v1.5h-1.5zM721.25 154.5h1.5v1.5h-1.5zM721.25 166.5h1.5v1.5h-1.5zM721.25 178.5h1.5v1.5h-1.5zM721.25 190.5h1.5v1.5h-1.5zM721.25 202.5h1.5v1.5h-1.5zM721.25 214.5h1.5v1.5h-1.5zM721.25 226.5h1.5v1.5h-1.5zM721.25 238.5h1.5v1.5h-1.5zM721.25 250.5h1.5v1.5h-1.5zM721.25 262.5h1.5v1.5h-1.5zM721.25 274.5h1.5v1.5h-1.5zM721.25 286.5h1.5v1.5h-1.5zM721.25 298.5h1.5v1.5h-1.5zM721.25 310.5h1.5v1.5h-1.5zM721.25 322.5h1.5v1.5h-1.5zM721.25 334.5h1.5v1.5h-1.5zM721.25 346.5h1.5v1.5h-1.5zM721.25 358.5h1.5v1.5h-1.5zM721.25 370.5h1.5v1.5h-1.5zM721.25 382.5h1.5v1.5h-1.5zM721.25 394.5h1.5v1.5h-1.5zM721.25 406.5h1.5v1.5h-1.5zM721.25 418.5h1.5v1.5h-1.5zM721.25 430.5h1.5v1.5h-1.5zM721.25 442.5h1.5v1.5h-1.5zM721.25 454.5h1.5v1.5h-1.5zM721.25 466.5h1.5v1.5h-1.5zM721.25 478.5h1.5v1.5h-1.5zM721.25 490.5h1.5v1.5h-1.5zM721.25 502.5h1.5v1.5h-1.5zM721.25 514.5h1.5v1.5h-1.5zM721.25 526.5h1.5v1.5h-1.5zM721.25 538.5h1.5v1.5h-1.5zM721.25 550.5h1.5v1.5h-1.5zM721.25 562.5h1.5v1.5h-1.5zM721.25 574.5h1.5v1.5h-1.5zM721.25 586.5h1.5v1.5h-1.5zM721.25 598.5h1.5v1.5h-1.5zM721.25 610.5h1.5v1.5h-1.5zM733.25 82.5h1.5v1.5h-1.5zM733.25 142.5h1.5v1.5h-1.5zM733.25 202.5h1.5v1.5h-1.5zM733.25 262.5h1.5v1.5h-1.5zM733.25 382.5h1.5v1.5h-1.5zM733.25 442.5h1.5v1.5h-1.5zM733.25 502.5h1.5v1.5h-1.5zM733.25 562.5h1.5v1.5h-1.5zM745.25 82.5h1.5v1.5h-1.5zM745.25 142.5h1.5v1.5h-1.5zM745.25 202.5h1.5v1.5h-1.5zM745.25 262.5h1.5v1.5h-1.5zM745.25 382.5h1.5v1.5h-1.5zM745.25 442.5h1.5v1.5h-1.5zM745.25 502.5h1.5v1.5h-1.5zM745.25 562.5h1.5v1.5h-1.5zM757.25 82.5h1.5v1.5h-1.5zM757.25 142.5h1.5v1.5h-1.5zM757.25 202.5h1.5v1.5h-1.5zM757.25 262.5h1.5v1.5h-1.5zM757.25 382.5h1.5v1.5h-1.5zM757.25 442.5h1.5v1.5h-1.5zM757.25 502.5h1.5v1.5h-1.5zM757.25 562.5h1.5v1.5h-1.5zM769.25 82.5h1.5v1.5h-1.5zM769.25 142.5h1.5v1.5h-1.5zM769.25 202.5h1.5v1.5h-1.5zM769.25 262.5h1.5v1.5h-1.5zM769.25 382.5h1.5v1.5h-1.5zM769.25 442.5h1.5v1.5h-1.5zM769.25 502.5h1.5v1.5h-1.5zM769.25 562.5h1.5v1.5h-1.5zM781.25 34.5h1.5v1.5h-1.5zM781.25 46.5h1.5v1.5h-1.5zM781.25 58.5h1.5v1.5h-1.5zM781.25 70.5h1.5v1.5h-1.5zM781.25 82.5h1.5v1.5h-1.5zM781.25 94.5h1.5v1.5h-1.5zM781.25 106.5h1.5v1.5h-1.5zM781.25 118.5h1.5v1.5h-1.5zM781.25 130.5h1.5v1.5h-1.5zM781.25 142.5h1.5v1.5h-1.5zM781.25 154.5h1.5v1.5h-1.5zM781.25 166.5h1.5v1.5h-1.5zM781.25 178.5h1.5v1.5h-1.5zM781.25 190.5h1.5v1.5h-1.5zM781.25 202.5h1.5v1.5h-1.5zM781.25 214.5h1.5v1.5h-1.5zM781.25 226.5h1.5v1.5h-1.5zM781.25 238.5h1.5v1.5h-1.5zM781.25 250.5h1.5v1.5h-1.5zM781.25 262.5h1.5v1.5h-1.5zM781.25 274.5h1.5v1.5h-1.5zM781.25 286.5h1.5v1.5h-1.5zM781.25 298.5h1.5v1.5h-1.5zM781.25 310.5h1.5v1.5h-1.5zM781.25 322.5h1.5v1.5h-1.5zM781.25 334.5h1.5v1.5h-1.5zM781.25 346.5h1.5v1.5h-1.5zM781.25 358.5h1.5v1.5h-1.5zM781.25 370.5h1.5v1.5h-1.5zM781.25 382.5h1.5v1.5h-1.5zM781.25 394.5h1.5v1.5h-1.5zM781.25 406.5h1.5v1.5h-1.5zM781.25 418.5h1.5v1.5h-1.5zM781.25 430.5h1.5v1.5h-1.5zM781.25 442.5h1.5v1.5h-1.5zM781.25 454.5h1.5v1.5h-1.5zM781.25 466.5h1.5v1.5h-1.5zM781.25 478.5h1.5v1.5h-1.5zM781.25 490.5h1.5v1.5h-1.5zM781.25 502.5h1.5v1.5h-1.5zM781.25 514.5h1.5v1.5h-1.5zM781.25 526.5h1.5v1.5h-1.5zM781.25 538.5h1.5v1.5h-1.5zM781.25 550.5h1.5v1.5h-1.5zM781.25 562.5h1.5v1.5h-1.5zM781.25 574.5h1.5v1.5h-1.5zM781.25 586.5h1.5v1.5h-1.5zM781.25 598.5h1.5v1.5h-1.5zM781.25 610.5h1.5v1.5h-1.5zM793.25 82.5h1.5v1.5h-1.5zM793.25 142.5h1.5v1.5h-1.5zM793.25 202.5h1.5v1.5h-1.5zM793.25 262.5h1.5v1.5h-1.5zM793.25 382.5h1.5v1.5h-1.5zM793.25 442.5h1.5v1.5h-1.5zM793.25 502.5h1.5v1.5h-1.5zM793.25 562.5h1.5v1.5h-1.5zM805.25 82.5h1.5v1.5h-1.5zM805.25 142.5h1.5v1.5h-1.5zM805.25 202.5h1.5v1.5h-1.5zM805.25 262.5h1.5v1.5h-1.5zM805.25 382.5h1.5v1.5h-1.5zM805.25 442.5h1.5v1.5h-1.5zM805.25 502.5h1.5v1.5h-1.5zM805.25 562.5h1.5v1.5h-1.5zM817.25 82.5h1.5v1.5h-1.5zM817.25 142.5h1.5v1.5h-1.5zM817.25 202.5h1.5v1.5h-1.5zM817.25 262.5h1.5v1.5h-1.5zM817.25 382.5h1.5v1.5h-1.5zM817.25 442.5h1.5v1.5h-1.5zM817.25 502.5h1.5v1.5h-1.5zM817.25 562.5h1.5v1.5h-1.5zM829.25 82.5h1.5v1.5h-1.5zM829.25 142.5h1.5v1.5h-1.5zM829.25 202.5h1.5v1.5h-1.5zM829.25 262.5h1.5v1.5h-1.5zM829.25 382.5h1.5v1.5h-1.5zM829.25 442.5h1.5v1.5h-1.5zM829.25 502.5h1.5v1.5h-1.5zM829.25 562.5h1.5v1.5h-1.5zM841.25 34.5h1.5v1.5h-1.5zM841.25 46.5h1.5v1.5h-1.5zM841.25 58.5h1.5v1.5h-1.5zM841.25 70.5h1.5v1.5h-1.5zM841.25 82.5h1.5v1.5h-1.5zM841.25 94.5h1.5v1.5h-1.5zM841.25 106.5h1.5v1.5h-1.5zM841.25 118.5h1.5v1.5h-1.5zM841.25 130.5h1.5v1.5h-1.5zM841.25 142.5h1.5v1.5h-1.5zM841.25 154.5h1.5v1.5h-1.5zM841.25 166.5h1.5v1.5h-1.5zM841.25 178.5h1.5v1.5h-1.5zM841.25 190.5h1.5v1.5h-1.5zM841.25 202.5h1.5v1.5h-1.5zM841.25 214.5h1.5v1.5h-1.5zM841.25 226.5h1.5v1.5h-1.5zM841.25 238.5h1.5v1.5h-1.5zM841.25 250.5h1.5v1.5h-1.5zM841.25 262.5h1.5v1.5h-1.5zM841.25 274.5h1.5v1.5h-1.5zM841.25 286.5h1.5v1.5h-1.5zM841.25 298.5h1.5v1.5h-1.5zM841.25 310.5h1.5v1.5h-1.5zM841.25 322.5h1.5v1.5h-1.5zM841.25 334.5h1.5v1.5h-1.5zM841.25 346.5h1.5v1.5h-1.5zM841.25 358.5h1.5v1.5h-1.5zM841.25 370.5h1.5v1.5h-1.5zM841.25 382.5h1.5v1.5h-1.5zM841.25 394.5h1.5v1.5h-1.5zM841.25 406.5h1.5v1.5h-1.5zM841.25 418.5h1.5v1.5h-1.5zM841.25 430.5h1.5v1.5h-1.5zM841.25 442.5h1.5v1.5h-1.5zM841.25 454.5h1.5v1.5h-1.5zM841.25 466.5h1.5v1.5h-1.5zM841.25 478.5h1.5v1.5h-1.5zM841.25 490.5h1.5v1.5h-1.5zM841.25 502.5h1.5v1.5h-1.5zM841.25 514.5h1.5v1.5h-1.5zM841.25 526.5h1.5v1.5h-1.5zM841.25 538.5h1.5v1.5h-1.5zM841.25 550.5h1.5v1.5h-1.5zM841.25 562.5h1.5v1.5h-1.5zM841.25 574.5h1.5v1.5h-1.5zM841.25 586.5h1.5v1.5h-1.5zM841.25 598.5h1.5v1.5h-1.5zM841.25 610.5h1.5v1.5h-1.5zM853.25 82.5h1.5v1.5h-1.5zM853.25 142.5h1.5v1.5h-1.5zM853.25 202.5h1.5v1.5h-1.5zM853.25 262.5h1.5v1.5h-1.5zM853.25 382.5h1.5v1.5h-1.5zM853.25 442.5h1.5v1.5h-1.5zM853.25 502.5h1.5v1.5h-1.5zM853.25 562.5h1.5v1.5h-1.5zM865.25 82.5h1.5v1.5h-1.5zM865.25 142.5h1.5v1.5h-1.5zM865.25 202.5h1.5v1.5h-1.5zM865.25 262.5h1.5v1.5h-1.5zM865.25 382.5h1.5v1.5h-1.5zM865.25 442.5h1.5v1.5h-1.5zM865.25 502.5h1.5v1.5h-1.5zM865.25 562.5h1.5v1.5h-1.5zM877.25 82.5h1.5v1.5h-1.5zM877.25 142.5h1.5v1.5h-1.5zM877.25 202.5h1.5v1.5h-1.5zM877.25 262.5h1.5v1.5h-1.5zM877.25 382.5h1.5v1.5h-1.5zM877.25 442.5h1.5v1.5h-1.5zM877.25 502.5h1.5v1.5h-1.5zM877.25 562.5h1.5v1.5h-1.5zM889.25 82.5h1.5v1.5h-1.5zM889.25 142.5h1.5v1.5h-1.5zM889.25 202.5h1.5v1.5h-1.5zM889.25 262.5h1.5v1.5h-1.5zM889.25 382.5h1.5v1.5h-1.5zM889.25 442.5h1.5v1.5h-1.5zM889.25 502.5h1.5v1.5h-1.5zM889.25 562.5h1.5v1.5h-1.5zM901.25 34.5h1.5v1.5h-1.5zM901.25 46.5h1.5v1.5h-1.5zM901.25 58.5h1.5v1.5h-1.5zM901.25 70.5h1.5v1.5h-1.5zM901.25 82.5h1.5v1.5h-1.5zM901.25 94.5h1.5v1.5h-1.5zM901.25 106.5h1.5v1.5h-1.5zM901.25 118.5h1.5v1.5h-1.5zM901.25 130.5h1.5v1.5h-1.5zM901.25 142.5h1.5v1.5h-1.5zM901.25 154.5h1.5v1.5h-1.5zM901.25 166.5h1.5v1.5h-1.5zM901.25 178.5h1.5v1.5h-1.5zM901.25 190.5h1.5v1.5h-1.5zM901.25 202.5h1.5v1.5h-1.5zM901.25 214.5h1.5v1.5h-1.5zM901.25 226.5h1.5v1.5h-1.5zM901.25 238.5h1.5v1.5h-1.5zM901.25 250.5h1.5v1.5h-1.5zM901.25 262.5h1.5v1.5h-1.5zM901.25 274.5h1.5v1.5h-1.5zM901.25 286.5h1.5v1.5h-1.5zM901.25 298.5h1.5v1.5h-1.5zM901.25 310.5h1.5v1.5h-1.5zM901.25 322.5h1.5v1.5h-1.5zM901.25 334.5h1.5v1.5h-1.5zM901.25 346.5h1.5v1.5h-1.5zM901.25 358.5h1.5v1.5h-1.5zM901.25 370.5h1.5v1.5h-1.5zM901.25 382.5h1.5v1.5h-1.5zM901.25 394.5h1.5v1.5h-1.5zM901.25 406.5h1.5v1.5h-1.5zM901.25 418.5h1.5v1.5h-1.5zM901.25 430.5h1.5v1.5h-1.5zM901.25 442.5h1.5v1.5h-1.5zM901.25 454.5h1.5v1.5h-1.5zM901.25 466.5h1.5v1.5h-1.5zM901.25 478.5h1.5v1.5h-1.5zM901.25 490.5h1.5v1.5h-1.5zM901.25 502.5h1.5v1.5h-1.5zM901.25 514.5h1.5v1.5h-1.5zM901.25 526.5h1.5v1.5h-1.5zM901.25 538.5h1.5v1.5h-1.5zM901.25 550.5h1.5v1.5h-1.5zM901.25 562.5h1.5v1.5h-1.5zM901.25 574.5h1.5v1.5h-1.5zM901.25 586.5h1.5v1.5h-1.5zM901.25 598.5h1.5v1.5h-1.5zM901.25 610.5h1.5v1.5h-1.5zM913.25 82.5h1.5v1.5h-1.5zM913.25 142.5h1.5v1.5h-1.5zM913.25 202.5h1.5v1.5h-1.5zM913.25 262.5h1.5v1.5h-1.5zM913.25 382.5h1.5v1.5h-1.5zM913.25 442.5h1.5v1.5h-1.5zM913.25 502.5h1.5v1.5h-1.5zM913.25 562.5h1.5v1.5h-1.5zM925.25 82.5h1.5v1.5h-1.5zM925.25 142.5h1.5v1.5h-1.5zM925.25 202.5h1.5v1.5h-1.5zM925.25 262.5h1.5v1.5h-1.5zM925.25 382.5h1.5v1.5h-1.5zM925.25 442.5h1.5v1.5h-1.5zM925.25 502.5h1.5v1.5h-1.5zM925.25 562.5h1.5v1.5h-1.5z" fill="#8a8a8a"/>
<path d="M37.5 25h1.2v3h-1.2zM37.5 618h1.2v3h-1.2zM49.5 25h1.2v3h-1.2zM49.5 618h1.2v3h-1.2zM61.5 25h1.2v6h-1.2zM61.5 615h1.2v6h-1.2zM73.5 25h1.2v3h-1.2zM73.5 618h1.2v3h-1.2zM85.5 25h1.2v3h-1.2zM85.5 618h1.2v3h-1.2zM97.5 25h1.2v3h-1.2zM97.5 618h1.2v3h-1.2zM109.5 25h1.2v3h-1.2zM109.5 618h1.2v3h-1.2zM121.5 25h1.2v6h-1.2zM121.5 615h1.2v6h-1.2zM133.5 25h1.2v3h-1.2zM133.5 618h1.2v3h-1.2zM145.5 25h1.2v3h-1.2zM145.5 618h1.2v3h-1.2zM157.5 25h1.2v3h-1.2zM157.5 618h1.2v3h-1.2zM169.5 25h1.2v3h-1.2zM169.5 618h1.2v3h-1.2zM181.5 25h1.2v6h-1.2zM181.5 615h1.2v6h-1.2zM181.3 316h1.4v14h-1.4zM193.5 25h1.2v3h-1.2zM193.5 618h1.2v3h-1.2zM205.5 25h1.2v3h-1.2zM205.5 618h1.2v3h-1.2zM217.5 25h1.2v3h-1.2zM217.5 618h1.2v3h-1.2zM229.5 25h1.2v3h-1.2zM229.5 618h1.2v3h-1.2zM241.5 25h1.2v6h-1.2zM241.5 615h1.2v6h-1.2zM253.5 25h1.2v3h-1.2zM253.5 618h1.2v3h-1.2zM265.5 25h1.2v3h-1.2zM265.5 618h1.2v3h-1.2zM277.5 25h1.2v3h-1.2zM277.5 618h1.2v3h-1.2zM289.5 25h1.2v3h-1.2zM289.5 618h1.2v3h-1.2zM301.5 25h1.2v6h-1.2zM301.5 615h1.2v6h-1.2zM313.5 25h1.2v3h-1.2zM313.5 618h1.2v3h-1.2zM325.5 25h1.2v3h-1.2zM325.5 618h1.2v3h-1.2zM337.5 25h1.2v3h-1.2zM337.5 618h1.2v3h-1.2zM349.5 25h1.2v3h-1.2zM349.5 618h1.2v3h-1.2zM361.5 25h1.2v6h-1.2zM361.5 615h1.2v6h-1.2zM373.5 25h1.2v3h-1.2zM373.5 618h1.2v3h-1.2zM385.5 25h1.2v3h-1.2zM385.5 618h1.2v3h-1.2zM397.5 25h1.2v3h-1.2zM397.5 618h1.2v3h-1.2zM409.5 25h1.2v3h-1.2zM409.5 618h1.2v3h-1.2zM421.5 25h1.2v6h-1.2zM421.5 615h1.2v6h-1.2zM433.5 25h1.2v3h-1.2zM433.5 618h1.2v3h-1.2zM445.5 25h1.2v3h-1.2zM445.5 618h1.2v3h-1.2zM457.5 25h1.2v3h-1.2zM457.5 618h1.2v3h-1.2zM469.5 25h1.2v3h-1.2zM469.5 618h1.2v3h-1.2zM481.5 25h1.2v6h-1.2zM481.5 615h1.2v6h-1.2zM493.5 25h1.2v3h-1.2zM493.5 618h1.2v3h-1.2zM505.5 25h1.2v3h-1.2zM505.5 618h1.2v3h-1.2zM517.5 25h1.2v3h-1.2zM517.5 618h1.2v3h-1.2zM529.5 25h1.2v3h-1.2zM529.5 618h1.2v3h-1.2zM541.5 25h1.2v6h-1.2zM541.5 615h1.2v6h-1.2zM553.5 25h1.2v3h-1.2zM553.5 618h1.2v3h-1.2zM565.5 25h1.2v3h-1.2zM565.5 618h1.2v3h-1.2zM577.5 25h1.2v3h-1.2zM577.5 618h1.2v3h-1.2zM589.5 25h1.2v3h-1.2zM589.5 618h1.2v3h-1.2zM601.5 25h1.2v6h-1.2zM601.5 615h1.2v6h-1.2zM613.5 25h1.2v3h-1.2zM613.5 618h1.2v3h-1.2zM625.5 25h1.2v3h-1.2zM625.5 618h1.2v3h-1.2zM637.5 25h1.2v3h-1.2zM637.5 618h1.2v3h-1.2zM649.5 25h1.2v3h-1.2zM649.5 618h1.2v3h-1.2zM661.5 25h1.2v6h-1.2zM661.5 615h1.2v6h-1.2zM673.5 25h1.2v3h-1.2zM673.5 618h1.2v3h-1.2zM685.5 25h1.2v3h-1.2zM685.5 618h1.2v3h-1.2zM697.5 25h1.2v3h-1.2zM697.5 618h1.2v3h-1.2zM709.5 25h1.2v3h-1.2zM709.5 618h1.2v3h-1.2zM721.5 25h1.2v6h-1.2zM721.5 615h1.2v6h-1.2zM733.5 25h1.2v3h-1.2zM733.5 618h1.2v3h-1.2zM745.5 25h1.2v3h-1.2zM745.5 618h1.2v3h-1.2zM757.5 25h1.2v3h-1.2zM757.5 618h1.2v3h-1.2zM769.5 25h1.2v3h-1.2zM769.5 618h1.2v3h-1.2zM781.5 25h1.2v6h-1.2zM781.5 615h1.2v6h-1.2zM781.3 316h1.4v14h-1.4zM793.5 25h1.2v3h-1.2zM793.5 618h1.2v3h-1.2zM805.5 25h1.2v3h-1.2zM805.5 618h1.2v3h-1.2zM817.5 25h1.2v3h-1.2zM817.5 618h1.2v3h-1.2zM829.5 25h1.2v3h-1.2zM829.5 618h1.2v3h-1.2zM841.5 25h1.2v6h-1.2zM841.5 615h1.2v6h-1.2zM853.5 25h1.2v3h-1.2zM853.5 618h1.2v3h-1.2zM865.5 25h1.2v3h-1.2zM865.5 618h1.2v3h-1.2zM877.5 25h1.2v3h-1.2zM877.5 618h1.2v3h-1.2zM889.5 25h1.2v3h-1.2zM889.5 618h1.2v3h-1.2zM901.5 25h1.2v6h-1.2zM901.5 615h1.2v6h-1.2zM913.5 25h1.2v3h-1.2zM913.5 618h1.2v3h-1.2zM925.5 25h1.2v3h-1.2zM925.5 618h1.2v3h-1.2zM26 35h4v1.2h-4zM930 35h4v1.2h-4zM479 35h5v1.4h-5zM26 47h4v1.2h-4zM930 47h4v1.2h-4zM479 47h5v1.4h-5zM26 59h4v1.2h-4zM930 59h4v1.2h-4zM479 59h5v1.4h-5zM26 71h4v1.2h-4zM930 71h4v1.2h-4zM479 71h5v1.4h-5zM26 83h7v1.2h-7zM927 83h7v1.2h-7zM479 83h5v1.4h-5zM26 95h4v1.2h-4zM930 95h4v1.2h-4zM479 95h5v1.4h-5zM26 107h4v1.2h-4zM930 107h4v1.2h-4zM479 107h5v1.4h-5zM26 119h4v1.2h-4zM930 119h4v1.2h-4zM479 119h5v1.4h-5zM26 131h4v1.2h-4zM930 131h4v1.2h-4zM479 131h5v1.4h-5zM26 143h7v1.2h-7zM927 143h7v1.2h-7zM479 143h5v1.4h-5zM26 155h4v1.2h-4zM930 155h4v1.2h-4zM479 155h5v1.4h-5zM26 167h4v1.2h-4zM930 167h4v1.2h-4zM479 167h5v1.4h-5zM26 179h4v1.2h-4zM930 179h4v1.2h-4zM479 179h5v1.4h-5zM26 191h4v1.2h-4zM930 191h4v1.2h-4zM479 191h5v1.4h-5zM26 203h7v1.2h-7zM927 203h7v1.2h-7zM479 203h5v1.4h-5zM26 215h4v1.2h-4zM930 215h4v1.2h-4zM479 215h5v1.4h-5zM26 227h4v1.2h-4zM930 227h4v1.2h-4zM479 227h5v1.4h-5zM26 239h4v1.2h-4zM930 239h4v1.2h-4zM479 239h5v1.4h-5zM26 251h4v1.2h-4zM930 251h4v1.2h-4zM479 251h5v1.4h-5zM26 263h7v1.2h-7zM927 263h7v1.2h-7zM479 263h5v1.4h-5zM26 275h4v1.2h-4zM930 275h4v1.2h-4zM479 275h5v1.4h-5zM26 287h4v1.2h-4zM930 287h4v1.2h-4zM479 287h5v1.4h-5zM26 299h4v1.2h-4zM930 299h4v1.2h-4zM479 299h5v1.4h-5zM26 311h4v1.2h-4zM930 311h4v1.2h-4zM479 311h5v1.4h-5zM26 323h7v1.2h-7zM927 323h7v1.2h-7zM479 323h5v1.4h-5zM26 335h4v1.2h-4zM930 335h4v1.2h-4zM479 335h5v1.4h-5zM26 347h4v1.2h-4zM930 347h4v1.2h-4zM479 347h5v1.4h-5zM26 359h4v1.2h-4zM930 359h4v1.2h-4zM479 359h5v1.4h-5zM26 371h4v1.2h-4zM930 371h4v1.2h-4zM479 371h5v1.4h-5zM26 383h7v1.2h-7zM927 383h7v1.2h-7zM479 383h5v1.4h-5zM26 395h4v1.2h-4zM930 395h4v1.2h-4zM479 395h5v1.4h-5zM26 407h4v1.2h-4zM930 407h4v1.2h-4zM479 407h5v1.4h-5zM26 419h4v1.2h-4zM930 419h4v1.2h-4zM479 419h5v1.4h-5zM26 431h4v1.2h-4zM930 431h4v1.2h-4zM479 431h5v1.4h-5zM26 443h7v1.2h-7zM927 443h7v1.2h-7zM479 443h5v1.4h-5zM26 455h4v1.2h-4zM930 455h4v1.2h-4zM479 455h5v1.4h-5zM26 467h4v1.2h-4zM930 467h4v1.2h-4zM479 467h5v1.4h-5zM26 479h4v1.2h-4zM930 479h4v1.2h-4zM479 479h5v1.4h-5zM26 491h4v1.2h-4zM930 491h4v1.2h-4zM479 491h5v1.4h-5zM26 503h7v1.2h-7zM927 503h7v1.2h-7zM479 503h5v1.4h-5zM26 515h4v1.2h-4zM930 515h4v1.2h-4zM479 515h5v1.4h-5zM26 527h4v1.2h-4zM930 527h4v1.2h-4zM479 527h5v1.4h-5zM26 539h4v1.2h-4zM930 539h4v1.2h-4zM479 539h5v1.4h-5zM26 551h4v1.2h-4zM930 551h4v1.2h-4zM479 551h5v1.4h-5zM26 563h7v1.2h-7zM927 563h7v1.2h-7zM479 563h5v1.4h-5zM26 575h4v1.2h-4zM930 575h4v1.2h-4zM479 575h5v1.4h-5zM26 587h4v1.2h-4zM930 587h4v1.2h-4zM479 587h5v1.4h-5zM26 599h4v1.2h-4zM930 599h4v1.2h-4zM479 599h5v1.4h-5zM26 611h4v1.2h-4zM930 611h4v1.2h-4zM479 611h5v1.4h-5z" fill="#e8e8e8"/>
<rect x="24" y="23" width="912" height="2" fill="#fff"/>
<rect x="24" y="621" width="912" height="2" fill="#fff"/>
<rect x="24" y="23" width="2" height="600" fill="#fff"/>
<rect x="934" y="23" width="2" height="600" fill="#fff"/>
<line x1="26" y1="191.5" x2="934" y2="191.5" stroke="#b030c0" stroke-width="1.7" stroke-dasharray="9 1 3 1"/>
<line x1="26" y1="323.5" x2="934" y2="323.5" stroke="#b030c0" stroke-width="1.7" stroke-dasharray="9 1 3 1"/>
<path d="M37.4 321.5h1.4v4h-1.4zM49.4 321.5h1.4v4h-1.4zM61.4 321.5h1.4v4h-1.4zM73.4 321.5h1.4v4h-1.4zM85.4 321.5h1.4v4h-1.4zM97.4 321.5h1.4v4h-1.4zM109.4 321.5h1.4v4h-1.4zM121.4 321.5h1.4v4h-1.4zM133.4 321.5h1.4v4h-1.4zM145.4 321.5h1.4v4h-1.4zM157.4 321.5h1.4v4h-1.4zM169.4 321.5h1.4v4h-1.4zM181.4 321.5h1.4v4h-1.4zM193.4 321.5h1.4v4h-1.4zM205.4 321.5h1.4v4h-1.4zM217.4 321.5h1.4v4h-1.4zM229.4 321.5h1.4v4h-1.4zM241.4 321.5h1.4v4h-1.4zM253.4 321.5h1.4v4h-1.4zM265.4 321.5h1.4v4h-1.4zM277.4 321.5h1.4v4h-1.4zM289.4 321.5h1.4v4h-1.4zM301.4 321.5h1.4v4h-1.4zM313.4 321.5h1.4v4h-1.4zM325.4 321.5h1.4v4h-1.4zM337.4 321.5h1.4v4h-1.4zM349.4 321.5h1.4v4h-1.4zM361.4 321.5h1.4v4h-1.4zM373.4 321.5h1.4v4h-1.4zM385.4 321.5h1.4v4h-1.4zM397.4 321.5h1.4v4h-1.4zM409.4 321.5h1.4v4h-1.4zM421.4 321.5h1.4v4h-1.4zM433.4 321.5h1.4v4h-1.4zM445.4 321.5h1.4v4h-1.4zM457.4 321.5h1.4v4h-1.4zM469.4 321.5h1.4v4h-1.4zM481.4 321.5h1.4v4h-1.4zM493.4 321.5h1.4v4h-1.4zM505.4 321.5h1.4v4h-1.4zM517.4 321.5h1.4v4h-1.4zM529.4 321.5h1.4v4h-1.4zM541.4 321.5h1.4v4h-1.4zM553.4 321.5h1.4v4h-1.4zM565.4 321.5h1.4v4h-1.4zM577.4 321.5h1.4v4h-1.4zM589.4 321.5h1.4v4h-1.4zM601.4 321.5h1.4v4h-1.4zM613.4 321.5h1.4v4h-1.4zM625.4 321.5h1.4v4h-1.4zM637.4 321.5h1.4v4h-1.4zM649.4 321.5h1.4v4h-1.4zM661.4 321.5h1.4v4h-1.4zM673.4 321.5h1.4v4h-1.4zM685.4 321.5h1.4v4h-1.4zM697.4 321.5h1.4v4h-1.4zM709.4 321.5h1.4v4h-1.4zM721.4 321.5h1.4v4h-1.4zM733.4 321.5h1.4v4h-1.4zM745.4 321.5h1.4v4h-1.4zM757.4 321.5h1.4v4h-1.4zM769.4 321.5h1.4v4h-1.4zM781.4 321.5h1.4v4h-1.4zM793.4 321.5h1.4v4h-1.4zM805.4 321.5h1.4v4h-1.4zM817.4 321.5h1.4v4h-1.4zM829.4 321.5h1.4v4h-1.4zM841.4 321.5h1.4v4h-1.4zM853.4 321.5h1.4v4h-1.4zM865.4 321.5h1.4v4h-1.4zM877.4 321.5h1.4v4h-1.4zM889.4 321.5h1.4v4h-1.4zM901.4 321.5h1.4v4h-1.4zM913.4 321.5h1.4v4h-1.4zM925.4 321.5h1.4v4h-1.4z" fill="#e8b8e8"/>
<polyline points="138.0,324.8 138.5,327.8 139.0,324.8 140.0,324.8 142.0,324.8 142.5,326.8 143.0,324.8 144.0,324.8 144.5,326.8 145.0,324.8 146.0,324.8 146.5,326.8 147.0,324.8 148.0,324.8 148.5,327.8 149.0,324.8 150.0,324.8 152.0,324.8 152.5,327.8 153.0,324.8 154.0,324.8 156.0,324.8 156.5,326.8 157.0,324.8 158.0,324.8 158.5,327.8 159.0,324.8 160.0,324.8 162.0,324.8 164.0,324.8 164.5,326.8 165.0,324.8 166.0,324.8 168.0,324.8 170.0,324.8 170.5,327.8 171.0,324.8 172.0,324.8 172.5,327.8 173.0,324.8 174.0,324.8 176.0,324.8 178.0,324.8 180.0,324.8 182.0,324.8 182.5,326.8 183.0,324.8 184.0,324.8 186.0,324.8 188.0,324.8 190.0,324.8 190.5,327.8 191.0,324.8 192.0,324.8 194.0,324.8 196.0,324.8 198.0,324.8 200.0,324.8 202.0,324.8 204.0,324.8 206.0,324.8 206.5,327.8 207.0,324.8 208.0,324.8 210.0,324.8 210.5,326.8 211.0,324.8 212.0,324.8 212.5,327.8 213.0,324.8 213.0,324.8 213.0,220.0 213.3,215.0 215.0,205.0 216.7,199.5 220.8,198.5 223.3,200.8 224.2,205.0 225.0,198.3 227.5,193.3 230.0,191.7 232.5,194.2 234.2,196.7 236.7,197.5 237.5,205.0 240.0,206.7 241.7,211.7 244.2,220.0 246.7,230.0 249.2,243.3 250.0,248.3 253.3,253.3 255.8,261.7 258.3,273.3 260.8,283.3 263.3,290.0 265.8,294.0 268.3,291.0 271.7,288.0 274.2,292.0 277.4,290.0 277.6,277.0 278.0,276.9 278.0,276.9 280.0,276.9 280.0,273.4 283.0,273.4 283.0,274.5 286.0,274.5 286.0,277.0 288.0,277.0 288.0,274.0 291.0,274.0 291.0,272.0 294.0,272.0 294.0,272.0 296.0,272.0 296.0,277.0 298.0,277.0 298.0,277.0 301.0,277.0 301.0,276.0 302.0,276.0 302.0,274.0 303.5,274.0 303.5,278.0 305.0,278.0 305.0,276.0 306.5,276.0 306.5,276.0 308.5,276.0 308.5,274.0 311.5,274.0 311.5,274.0 313.0,274.0 313.0,277.0 316.0,277.0 316.0,277.0 318.0,277.0 318.0,275.0 320.0,275.0 320.0,275.0 321.0,275.0 321.0,278.0 324.0,278.0 324.0,275.0 327.0,275.0 327.0,279.0 330.0,279.0 330.0,277.5 331.0,277.5 331.0,276.5 333.0,276.5 333.0,275.4 336.0,275.4 336.0,277.2 338.0,277.2 338.0,275.1 341.0,275.1 341.0,277.0 342.0,277.0 342.0,280.0 343.5,280.0 343.5,275.9 345.5,275.9 345.5,278.8 347.5,278.8 347.5,278.7 349.5,278.7 349.5,275.6 351.0,275.6 351.0,280.5 352.5,280.5 352.5,280.5 354.0,280.5 354.0,280.4 355.5,280.4 355.5,277.3 356.5,277.3 356.5,277.3 359.5,277.3 359.5,279.2 361.5,279.2 361.5,279.1 363.5,279.1 363.5,274.4 365.0,274.4 365.0,278.8 366.0,278.8 366.0,281.6 367.0,281.6 367.0,282.5 370.0,282.5 370.0,283.1 371.5,283.1 371.5,282.0 374.5,282.0 374.5,281.6 376.0,281.6 376.0,283.4 377.5,283.4 377.5,280.2 379.5,280.2 379.5,280.0 380.5,280.0 380.5,280.9 382.0,280.9 382.0,281.7 383.5,281.7 383.5,277.1 385.0,277.1 385.0,278.5 388.0,278.5 388.0,279.2 390.0,279.2 390.0,279.7 393.0,279.7 393.0,280.5 394.5,280.5 394.5,282.9 397.5,282.9 397.5,278.3 399.0,278.3 399.0,282.6 400.0,282.6 400.0,282.1 403.0,282.1 403.0,276.6 404.0,276.6 404.0,278.2 405.0,278.2 405.0,274.7 408.0,274.7 408.0,280.1 409.5,280.1 409.5,279.2 412.5,279.2 412.5,277.6 414.5,277.6 414.5,277.8 416.0,277.8 416.0,278.0 417.0,278.0 417.0,279.1 418.5,279.1 418.5,278.3 419.5,278.3 419.5,278.4 421.5,278.4 421.5,279.2 423.0,279.2 423.0,279.0 426.0,279.0 426.0,285.5 427.5,285.5 427.5,285.2 430.5,285.2 430.5,284.8 432.5,284.8 432.5,288.2 433.5,288.2 433.5,289.0 434.5,289.0 434.5,291.8 435.5,291.8 435.5,283.5 437.5,283.5 437.5,294.1 439.5,294.1 439.5,292.4 442.5,292.4 442.5,288.1 444.0,288.1 444.0,288.0 445.0,288.0 445.0,293.9 446.5,293.9 446.5,293.8 447.5,293.8 447.5,291.7 449.5,291.7 449.5,287.5 451.0,287.5 451.0,287.4 453.0,287.4 453.0,288.2 455.0,288.2 455.0,288.0 456.5,288.0 456.5,296.8 457.5,296.8 457.5,288.2 459.0,288.2 459.0,282.0 460.0,282.0 460.0,282.5 463.0,282.5 463.0,278.6 465.0,278.6 465.0,278.1 466.5,278.1 466.5,280.3 468.0,280.3 468.0,284.5 470.0,284.5 470.0,279.8 473.0,279.8 473.0,280.3 475.0,280.3 475.0,285.6 478.0,285.6 478.0,283.1 480.0,283.1 480.0,283.4 482.0,283.4 482.0,287.1 483.5,287.1 483.5,289.0 484.5,289.0 484.5,289.6 485.5,289.6 485.5,289.8 486.5,289.8 486.5,295.1 487.5,295.1 487.5,295.4 488.5,295.4 488.5,289.5 489.5,289.5 489.5,289.8 490.5,289.8 490.5,284.1 491.5,284.1 491.5,292.8 492.5,292.8 492.5,287.8 493.5,287.8 493.5,287.8 494.5,287.8 494.5,285.1 495.5,285.1 495.5,287.5 496.5,287.5 496.5,281.0 497.5,281.0 497.5,291.0 498.5,291.0 498.5,286.6 499.5,286.6 499.5,290.7 500.5,290.7 500.5,286.7 501.5,286.7 501.5,291.9 502.5,291.9 502.5,284.0 503.5,284.0 503.5,291.5 504.5,291.5 504.5,281.6 505.5,281.6 505.5,288.1 506.5,288.1 506.5,284.6 507.5,284.6 507.5,288.0 508.5,288.0 508.5,285.4 509.5,285.4 509.5,290.7 510.5,290.7 510.5,285.0 511.5,285.0 511.5,289.3 512.5,289.3 512.5,288.2 513.5,288.2 513.5,293.7 514.5,293.7 514.5,287.3 515.5,287.3 515.5,291.7 516.5,291.7 516.5,284.9 517.5,284.9 517.5,293.3 518.5,293.3 518.5,284.9 519.5,284.9 519.5,288.9 520.5,288.9 520.5,286.6 521.5,286.6 521.5,292.6 522.5,292.6 522.5,283.7 523.5,283.7 523.5,291.1 524.5,291.1 524.5,286.7 525.5,286.7 525.5,290.4 526.5,290.4 526.5,295.6 527.5,295.6 527.5,292.6 528.5,292.6 528.5,289.6 529.5,289.6 529.5,300.2 530.5,300.2 530.5,285.9 531.5,285.9 531.5,293.1 532.5,293.1 532.5,286.8 533.5,286.8 533.5,290.5 534.5,290.5 534.5,285.4 535.5,285.4 535.5,292.0 536.5,292.0 536.5,287.8 537.5,287.8 537.5,293.6 538.5,293.6 538.5,286.2 539.5,286.2 539.5,290.7 540.5,290.7 540.5,285.4 541.5,285.4 541.5,294.0 542.5,294.0 542.5,288.1 543.5,288.1 543.5,290.3 544.5,290.3 544.5,287.1 545.5,287.1 545.5,291.3 546.5,291.3 546.5,288.7 547.5,288.7 547.5,293.3 548.5,293.3 548.5,285.7 549.5,285.7 549.5,290.3 550.5,290.3 550.5,284.8 551.5,284.8 551.5,292.0 552.5,292.0 552.5,281.5 553.5,281.5 553.5,290.3 554.5,290.3 554.5,284.7 555.5,284.7 555.5,290.9 556.5,290.9 556.5,283.0 557.5,283.0 557.5,294.3 558.5,294.3 558.5,285.1 559.5,285.1 559.5,292.1 560.5,292.1 560.5,287.9 561.5,287.9 561.5,292.5 562.5,292.5 562.5,287.2 563.5,287.2 563.5,293.3 564.5,293.3 564.5,285.6 565.5,285.6 565.5,290.5 566.5,290.5 566.5,283.2 567.5,283.2 567.5,289.9 568.5,289.9 568.5,283.9 569.5,283.9 569.5,290.9 570.5,290.9 570.5,290.9 571.5,290.9 571.5,291.9 572.5,291.9 572.5,285.9 573.5,285.9 573.5,288.6 574.5,288.6 574.5,285.2 575.5,285.2 575.5,290.8 576.5,290.8 576.5,284.8 577.5,284.8 577.5,292.0 578.5,292.0 578.5,287.7 579.5,287.7 579.5,291.9 580.5,291.9 580.5,292.1 581.5,292.1 581.5,289.9 582.5,289.9 582.5,284.3 583.5,284.3 583.5,300.6 584.5,300.6 584.5,288.1 585.5,288.1 585.5,292.2 586.5,292.2 586.5,289.1 587.5,289.1 587.5,291.1 588.5,291.1 588.5,286.3 589.5,286.3 589.5,292.6 590.5,292.6 590.5,288.0 591.5,288.0 591.5,292.5 592.5,292.5 592.5,286.3 593.5,286.3 593.5,290.2 594.5,290.2 594.5,286.2 595.5,286.2 595.5,290.7 596.5,290.7 596.5,286.8 597.5,286.8 597.5,283.6 598.5,283.6 598.5,286.5 599.5,286.5 599.5,290.6 600.5,290.6 600.5,291.7 601.5,291.7 601.5,291.0 602.5,291.0 602.5,285.1 603.5,285.1 603.5,294.5 604.5,294.5 604.5,284.9 605.5,284.9 605.5,291.1 606.5,291.1 606.5,286.6 607.5,286.6 607.5,292.7 608.5,292.7 608.5,283.5 609.5,283.5 609.5,289.6 610.5,289.6 610.5,290.6 611.5,290.6 611.5,291.8 612.5,291.8 612.5,288.4 613.5,288.4 613.5,295.5 614.5,295.5 614.5,289.4 615.5,289.4 615.5,292.8 616.5,292.8 616.5,288.2 617.5,288.2 617.5,295.8 618.5,295.8 618.5,285.3 619.5,285.3 619.5,292.3 620.5,292.3 620.5,292.0 621.5,292.0 621.5,294.5 622.5,294.5 622.5,288.6 623.5,288.6 623.5,295.1 624.5,295.1 624.5,290.9 625.5,290.9 625.5,296.4 626.5,296.4 626.5,289.5 627.5,289.5 627.5,295.8 628.5,295.8 628.5,293.2 629.5,293.2 629.5,296.4 630.5,296.4 630.5,290.0 631.5,290.0 631.5,296.1 632.5,296.1 632.5,292.2 633.5,292.2 633.5,293.6 634.5,293.6 634.5,292.1 635.5,292.1 635.5,297.8 636.5,297.8 636.5,291.6 637.5,291.6 637.5,296.0 638.5,296.0 638.5,291.9 639.5,291.9 639.5,294.6 640.5,294.6 640.5,290.7 641.5,290.7 641.5,294.4 642.5,294.4 642.5,289.4 643.5,289.4 643.5,296.8 644.5,296.8 644.5,295.9 645.5,295.9 645.5,296.9 646.5,296.9 646.5,290.2 647.5,290.2 647.5,292.5 648.5,292.5 648.5,292.6 649.5,292.6 649.5,295.5 650.5,295.5 650.5,291.9 651.5,291.9 651.5,292.7 652.5,292.7 652.5,293.7 653.5,293.7 653.5,307.1 654.5,307.1 654.5,294.0 655.5,294.0 655.5,300.3 656.5,300.3 656.5,291.0 657.5,291.0 657.5,289.9 658.5,289.9 658.5,294.1 659.5,294.1 659.5,291.9 660.5,291.9 660.5,289.4 661.5,289.4 661.5,294.8 662.5,294.8 662.5,293.3 663.5,293.3 663.5,295.7 664.5,295.7 664.5,300.9 665.5,300.9 665.5,295.3 666.5,295.3 666.5,291.7 667.5,291.7 667.5,298.1 668.5,298.1 668.5,291.4 669.5,291.4 669.5,298.2 670.5,298.2 670.5,292.5 671.5,292.5 671.5,294.9 672.5,294.9 672.5,282.0 673.5,282.0 673.5,298.2 674.5,298.2 674.5,286.7 675.5,286.7 675.5,299.2 676.5,299.2 676.5,295.3 677.5,295.3 677.5,296.9 678.5,296.9 678.5,291.3 679.5,291.3 679.5,297.3 680.5,297.3 680.5,290.6 681.5,290.6 681.5,296.5 682.5,296.5 682.5,293.9 683.5,293.9 683.5,296.3 684.5,296.3 684.5,292.1 685.5,292.1 685.5,296.5 686.5,296.5 686.5,290.5 687.5,290.5 687.5,298.3 688.5,298.3 688.5,289.9 689.5,289.9 689.5,294.8 690.5,294.8 690.5,291.6 691.5,291.6 691.5,294.3 692.5,294.3 692.5,289.9 693.5,289.9 693.5,297.8 694.5,297.8 694.5,289.7 695.5,289.7 695.5,295.8 696.5,295.8 696.5,286.4 697.5,286.4 697.5,294.0 698.5,294.0 698.5,293.3 699.5,293.3 699.5,297.7 700.5,297.7 700.5,295.5 701.5,295.5 701.5,296.4 702.5,296.4 702.5,291.2 703.5,291.2 703.5,296.9 704.5,296.9 704.5,292.4 705.5,292.4 705.5,294.6 706.5,294.6 706.5,295.0 707.5,295.0 707.5,294.4 708.5,294.4 708.5,294.4 709.5,294.4 709.5,292.6 710.5,292.6 710.5,293.3 711.5,293.3 711.5,296.6 712.5,296.6 712.5,292.0 713.5,292.0 713.5,298.8 714.5,298.8 714.5,293.6 715.5,293.6 715.5,296.7 716.5,296.7 716.5,295.0 717.5,295.0 717.5,298.6 718.5,298.6 718.5,292.8 719.5,292.8 719.5,298.8 720.5,298.8 720.5,294.0 721.5,294.0 721.5,294.5 722.5,294.5 722.5,294.3 723.5,294.3 723.5,300.2 724.5,300.2 724.5,290.3 725.5,290.3 725.5,296.2 726.5,296.2 726.5,290.2 727.5,290.2 727.5,297.4 728.5,297.4 728.5,289.3 729.5,289.3 729.5,297.6 730.5,297.6 730.5,295.3 731.5,295.3 731.5,296.9 732.5,296.9 732.5,293.3 733.5,293.3 733.5,297.9 734.5,297.9 734.5,292.0 735.5,292.0 735.5,293.9 736.5,293.9 736.5,289.5 737.5,289.5 737.5,297.0 738.5,297.0 738.5,290.1 739.5,290.1 739.5,297.4 740.5,297.4 740.5,290.8 741.5,290.8 741.5,295.7 742.5,295.7 742.5,289.8 743.5,289.8 743.5,293.9 744.5,293.9 744.5,290.6 745.5,290.6 745.5,292.4 746.5,292.4 746.5,292.3 747.5,292.3 747.5,292.0 748.5,292.0 748.5,292.2 749.5,292.2 749.5,296.8 750.5,296.8 750.5,293.2 751.5,293.2 751.5,295.5 752.5,295.5 752.5,296.6 753.5,296.6 753.5,297.6 754.5,297.6 754.5,292.2 755.5,292.2 755.5,298.0 756.5,298.0 756.5,291.6 757.5,291.6 757.5,295.9 758.5,295.9 758.5,291.8 759.5,291.8 759.5,297.7 760.5,297.7 760.5,293.0 761.5,293.0 761.5,301.1 762.5,301.1 762.5,293.0 763.5,293.0 763.5,301.6 764.5,301.6 764.5,297.1 765.5,297.1 765.5,304.9 766.5,304.9 766.5,301.8 767.5,301.8 767.5,306.5 768.5,306.5 768.5,295.6 769.5,295.6 769.5,294.6 770.5,294.6 770.5,293.1 771.5,293.1 771.5,296.1 772.5,296.1 772.5,290.7 773.5,290.7 773.5,296.9 774.5,296.9 774.5,291.0 775.5,291.0 775.5,296.4 776.5,296.4 776.5,290.8 777.5,290.8 777.5,298.5 778.5,298.5 778.5,296.2 779.5,296.2 779.5,300.6 780.5,300.6 780.5,294.1 781.5,294.1 781.5,299.2 782.5,299.2 782.5,295.1 783.5,295.1 783.5,299.2 784.5,299.2 784.5,295.7 785.5,295.7 785.5,302.4 786.5,302.4 786.5,291.2 787.5,291.2 787.5,298.7 788.5,298.7 788.5,296.5 789.5,296.5 789.5,300.1 790.5,300.1 790.5,292.6 791.5,292.6 791.5,298.0 792.5,298.0 792.5,297.1 793.5,297.1 793.5,299.2 794.5,299.2 794.5,297.5 795.5,297.5 795.5,298.9 796.5,298.9 796.5,292.3 797.5,292.3 797.5,299.1 798.5,299.1 798.5,291.1 799.5,291.1 799.5,299.9 800.5,299.9 800.5,294.2 801.5,294.2 801.5,305.0 802.5,305.0 802.5,289.3 803.5,289.3 803.5,296.4 804.5,296.4 804.5,295.9 805.5,295.9 805.5,301.5 806.5,301.5 806.5,291.7 807.5,291.7 807.5,299.3 808.5,299.3 808.5,295.0 809.5,295.0 809.5,299.4 810.5,299.4 810.5,297.1 811.5,297.1 811.5,298.6 812.5,298.6 812.5,295.5 813.5,295.5 813.5,298.9 814.5,298.9 814.5,293.8 815.5,293.8 815.5,300.1 816.5,300.1 816.5,294.9 817.5,294.9 817.5,296.8 818.5,296.8 818.5,295.5 819.5,295.5 819.5,303.2 820.5,303.2 820.5,294.0 821.5,294.0 821.5,295.2 822.5,295.2 822.5,293.3 823.5,293.3 823.5,298.3 824.5,298.3 824.5,295.7 825.5,295.7 825.5,301.1 826.5,301.1 826.5,292.9 827.5,292.9 827.5,302.2 828.5,302.2 828.5,293.9 829.5,293.9 829.5,299.5 830.5,299.5 830.5,292.5 831.5,292.5 831.5,305.1 832.0,305.1 832.0,324.8 833.0,324.8 835.0,324.8 837.0,324.8 837.5,327.8 838.0,324.8 839.0,324.8 841.0,324.8 843.0,324.8 843.5,321.8 844.0,324.8 845.0,324.8 847.0,324.8 849.0,324.8 851.0,324.8 853.0,324.8 855.0,324.8 857.0,324.8 859.0,324.8 859.5,321.8 860.0,324.8 861.0,324.8 863.0,324.8 863.5,326.8 864.0,324.8 865.0,324.8 865.5,321.8 866.0,324.8 867.0,324.8 869.0,324.8 869.5,327.8 870.0,324.8 871.0,324.8 873.0,324.8 875.0,324.8 875.5,327.8 876.0,324.8 877.0,324.8 879.0,324.8 879.5,321.8 880.0,324.8 881.0,324.8 881.5,326.8 882.0,324.8 883.0,324.8 885.0,324.8 887.0,324.8 887.5,321.8 888.0,324.8 889.0,324.8 891.0,324.8 893.0,324.8 895.0,324.8 895.5,327.8 896.0,324.8 897.0,324.8 899.0,324.8 901.0,324.8 901.5,326.8 902.0,324.8 903.0,324.8 903.5,327.8 904.0,324.8 905.0,324.8 907.0,324.8 909.0,324.8 909.5,321.8 910.0,324.8 911.0,324.8 913.0,324.8 913.5,327.8 914.0,324.8 915.0,324.8 917.0,324.8 917.5,326.8 918.0,324.8 919.0,324.8 921.0,324.8 923.0,324.8 923.5,321.8 924.0,324.8 925.0,324.8 925.5,327.8 926.0,324.8 927.0,324.8 927.5,327.8 928.0,324.8 929.0,324.8 931.0,324.8 933.0,324.8 934.0,324.8" fill="none" stroke="#f0f000" stroke-width="1.8" stroke-linejoin="miter"/>
</svg>

<!-- channel 2 marker -->
<svg class="a" style="left:0;top:312px" width="26" height="24"><path d="M0.8 1.2h17l5.5 10.3l-5.5 10.3h-17z" fill="#000" stroke="#e8e820" stroke-width="1.6"/><text x="3.5" y="18" font-family="Liberation Sans" font-size="17" fill="#e8e820">2</text></svg>

<!-- measurement overlay -->
<div class="a" style="left:30px;top:539px;width:226px;height:84px;box-sizing:border-box;border:2px solid #78b0d0;border-radius:6px;background:#000"></div>
<div class="badge" style="left:33px;top:542px;width:18px;height:18px;line-height:18px;font-size:16px">2</div>
<svg class="a" style="left:52px;top:547px" width="14" height="12"><path d="M1.5 10.5h11l-5.5-8z" fill="none" stroke="#e0e0e0" stroke-width="1.4"/></svg>
<div class="txt" style="left:63px;top:545px;font-size:18px;color:#e6e6e6;letter-spacing:1.3px">y:4.40v</div>
<div class="txt" style="left:51px;top:571px;font-size:18px;color:#e6e6e6;letter-spacing:1.3px">y1:4.40v</div>
<div class="txt" style="left:51px;top:598px;font-size:18px;color:#e6e6e6;letter-spacing:1.3px">y2:0.0mv</div>

<!-- bottom-left panels -->
<div class="a" style="left:0;top:623px;width:383px;height:97px;background:#86aaa8"></div>
<div class="a" style="left:1.5px;top:624px;width:249px;height:22.5px;background:#000;border-radius:5px"></div>
<div class="a" style="left:1.5px;top:648px;width:249px;height:23px;background:#000;border-radius:5px"></div>
<div class="a" style="left:252.5px;top:624px;width:128px;height:47px;background:#000;border-radius:5px"></div>
<div class="a" style="left:1.5px;top:673px;width:379px;height:44.5px;background:#000;border-radius:5px"></div>

<div class="badge r" style="left:3px;top:627px">1</div>
<div class="txt" style="left:22px;top:629px;font-size:18px;color:#c41020;font-family:'Liberation Sans',sans-serif;letter-spacing:0.5px">5V–</div>
<div class="txt" style="left:127px;top:629px;font-size:18px;color:#c41020;letter-spacing:1px">0.00div</div>
<div class="badge" style="left:3px;top:651px">2</div>
<div class="txt" style="left:22px;top:654px;font-size:18px;color:#d8d830;font-family:'Liberation Sans',sans-serif;letter-spacing:0.5px">2V–</div>
<div class="txt" style="left:127px;top:654px;font-size:18px;color:#d8d830;letter-spacing:1px">0.00div</div>

<div class="txt" style="left:270px;top:627px;font-size:18px;color:#e0e0e0;letter-spacing:0.7px">(500S/s)</div>
<div class="txt" style="left:262px;top:651px;font-size:18px;color:#e0e0e0;letter-spacing:1.2px">Depth:10K</div>

<div class="badge" style="left:2px;top:674px">2</div>
<div class="txt" style="left:26px;top:676px;font-size:18px;color:#d8d830;letter-spacing:1.2px">F:  ?</div>
<div class="badge" style="left:2px;top:697px">2</div>
<div class="txt" style="left:26px;top:699px;font-size:18px;color:#d8d830;letter-spacing:1.2px">+D:1.6%</div>
<div class="badge" style="left:192px;top:674px">2</div>
<div class="txt" style="left:217px;top:676px;font-size:18px;color:#d8d830;letter-spacing:1.2px">Vk:1.255v</div>
<div class="badge" style="left:192px;top:697px">2</div>
<div class="txt" style="left:217px;top:699px;font-size:18px;color:#d8d830;letter-spacing:1.2px">V:913.0mv</div>

<!-- pills bottom -->
<div class="pill" style="left:383px;top:623px;width:119px;height:22px"></div>
<div class="txt" style="left:405px;top:627px;font-size:18px;color:#e0e0e0;letter-spacing:1.2px">M:1.0s</div>

<div class="pill" style="left:799px;top:624px;width:153px;height:21px"></div>
<div class="badge r" style="left:800px;top:625px;width:19px;height:19px">1</div>
<svg class="a" style="left:821px;top:626px" width="26" height="18"><path d="M1 16.5h8.5l5.5-15h9" fill="none" stroke="#e0e0e0" stroke-width="1.5"/></svg>
<div class="txt" style="left:849px;top:628px;font-size:18px;color:#e0e0e0;letter-spacing:0.8px">0.00mV</div>

<!-- menu band -->
<div class="a" style="left:383px;top:645px;width:575px;height:72px;background:#0260a0"></div>
<div class="btn" style="left:387px;top:648px;width:108px;height:68px"></div>
<div class="txt" style="left:415px;top:660px;font-size:19px;font-weight:bold;color:#0a2a66;letter-spacing:0.5px">Type</div>
<div class="a" style="left:409px;top:686px;width:60px;height:23px;background:#e8e6e4"></div>
<div class="txt" style="left:410px;top:689px;font-size:18px;color:#000;letter-spacing:0.8px">Image</div>

<div class="btn" style="left:717px;top:648px;width:106px;height:68px"></div>
<div class="txt" style="left:745px;top:675px;font-size:16px;font-weight:bold;font-family:'Liberation Sans',sans-serif;color:#0a2a66;letter-spacing:2.9px">Save</div>
</body></html>
